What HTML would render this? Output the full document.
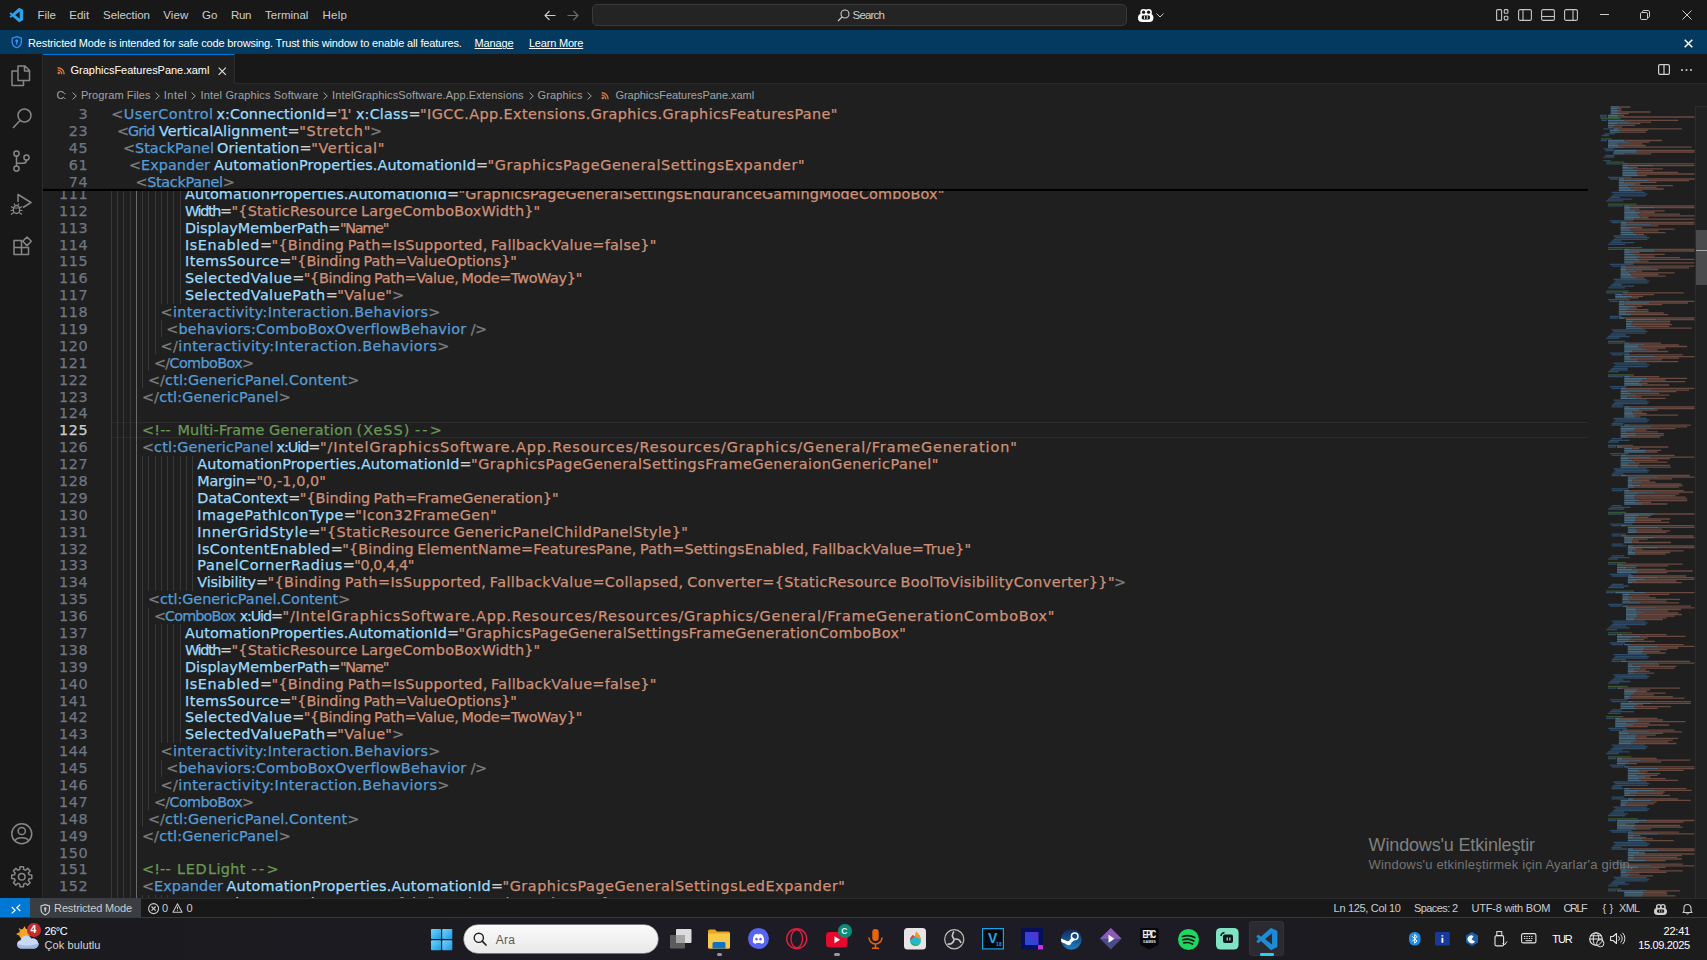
<!DOCTYPE html>
<html lang="en">
<head>
<meta charset="utf-8">
<title>GraphicsFeaturesPane.xaml - Visual Studio Code</title>
<style>
*{box-sizing:border-box;margin:0;padding:0}
html,body{width:1707px;height:960px;overflow:hidden;background:#181818;font-family:"Liberation Sans",sans-serif;color:#ccc}
#root{position:relative;width:1707px;height:960px;overflow:hidden}
.abs{position:absolute}
svg{display:block;position:absolute;overflow:visible}
/* title bar */
#title{left:0;top:0;width:1707px;height:30px;background:#181818}
#title .m{position:absolute;top:8px;font-size:11.5px;line-height:14px;color:#ccc;white-space:nowrap}
#search{left:592px;top:4px;width:535px;height:22px;background:#242424;border:1px solid #3a3a3a;border-radius:5px}
/* banner */
#banner{left:0;top:30px;width:1707px;height:24px;background:#043a5f}
#banner .t{position:absolute;top:6px;font-size:11px;line-height:14px;color:#fff;white-space:nowrap}
/* activity */
#act{left:0;top:54px;width:43px;height:844px;background:#181818;border-right:1px solid #2b2b2b}
/* tabs */
#tabs{left:43px;top:54px;width:1664px;height:30px;background:#181818}
#tabline{left:192px;top:29.2px;width:1472px;height:1px;background:#2b2b2b}
#tab{left:0;top:0;width:192px;height:30px;background:#1f1f1f;border-top:1px solid #0078d4;border-right:1px solid #2b2b2b}
#bc{left:43px;top:84px;width:1664px;height:22px;background:#1f1f1f}
#bc .t{position:absolute;top:4px;font-size:11px;line-height:14px;color:#a0a0a0;white-space:nowrap}
/* editor */
#ed{left:43px;top:106px;width:1664px;height:792px;background:#1f1f1f;overflow:hidden}
#sticky{left:0;top:0;width:1545px;height:85px;background:linear-gradient(180deg,#1f1f1f 0,#1f1f1f 81.5px,#161616 83.3px,#000 83.5px,#000 84.9px,rgba(0,0,0,0) 85px);overflow:hidden}
.ln{position:absolute;left:0;width:1545px;height:16.875px;font:14.4px/16.875px "DejaVu Sans","Liberation Sans",sans-serif;white-space:pre;word-spacing:-1.3px}
.ln b{position:absolute;top:0.6px;font-weight:normal;white-space:pre}
.ln i{font-style:normal}
.ln b,.ln u{-webkit-text-stroke:.25px}
.ln u{position:absolute;left:0;top:0.6px;width:45.1px;text-align:right;text-decoration:none;color:#6e7681;letter-spacing:.55px}
.ln u.an{color:#ccc}
.ln s{position:absolute;top:0;width:1px;height:17px;background:#383838}
.ln s.ga{background:#6b6b6b}
.cur:before{content:"";box-sizing:border-box;position:absolute;left:67px;top:-.15px;width:1478px;height:16.2px;border-top:1px solid #2b2b2b;border-bottom:1px solid #2b2b2b}
.p{color:#808080}.t{color:#569cd6}.a{color:#9cdcfe}.e{color:#ccc}.s{color:#ce9178}.c{color:#6a9955}
.tx{position:absolute;white-space:pre;display:block}
/* status */
#status{left:0;top:898px;width:1707px;height:20px;background:#181818;border-top:1px solid #2b2b2b}
#status .t{position:absolute;top:4px;font-size:11px;line-height:13px;color:#ccc;white-space:nowrap}
/* taskbar */
#task{left:0;top:918px;width:1707px;height:42px;background:linear-gradient(90deg,#1b1b1e 0,#1d1b24 35%,#1d1b24 70%,#1c1c1d 85%)}
#task .t{position:absolute;font-size:11px;line-height:13px;color:#fff;white-space:nowrap}
</style>
</head>
<body>
<div id="root">

<div id="title" class="abs">
<svg style="left:8.50px;top:7.90px" width="14.80" height="14.20" viewBox="-4 0 82 87" ><path d="M74.9 9.6 56 0.5a5.7 5.7 0 0 0-6.5 1.1L13.2 34.7 4.5 28.1a3.8 3.8 0 0 0-4.9.2l-2.8 2.5a3.8 3.8 0 0 0 0 5.6L4.3 43.3l-7.5 6.9a3.8 3.8 0 0 0 0 5.6l2.8 2.5a3.8 3.8 0 0 0 4.9.2l8.7-6.6 36.3 33.1a5.7 5.7 0 0 0 6.5 1.1l18.9-9.1a5.7 5.7 0 0 0 3.2-5.2V14.8a5.7 5.7 0 0 0-3.2-5.2zM57 65.6 29.400 43.300 57 21z" fill="#2aa3ee"/></svg>
<span class="tx" style="left:37.6px;top:7.8px;font-size:11.5px;line-height:14px;color:#ccc;letter-spacing:-0.077px;">File</span>
<span class="tx" style="left:69.3px;top:7.8px;font-size:11.5px;line-height:14px;color:#ccc;letter-spacing:-0.009px;">Edit</span>
<span class="tx" style="left:103.1px;top:7.8px;font-size:11.5px;line-height:14px;color:#ccc;letter-spacing:-0.064px;">Selection</span>
<span class="tx" style="left:163.3px;top:7.8px;font-size:11.5px;line-height:14px;color:#ccc;letter-spacing:0.110px;">View</span>
<span class="tx" style="left:202.1px;top:7.8px;font-size:11.5px;line-height:14px;color:#ccc;letter-spacing:-0.044px;">Go</span>
<span class="tx" style="left:231.1px;top:7.8px;font-size:11.5px;line-height:14px;color:#ccc;letter-spacing:-0.405px;">Run</span>
<span class="tx" style="left:265.1px;top:7.8px;font-size:11.5px;line-height:14px;color:#ccc;letter-spacing:-0.024px;">Terminal</span>
<span class="tx" style="left:322.4px;top:7.8px;font-size:11.5px;line-height:14px;color:#ccc;letter-spacing:0.298px;">Help</span>
<svg style="left:544.00px;top:10.00px" width="12.00" height="11.00" viewBox="0 0 12 11" ><path d="M11.5 5.5H1M5.5 1 1 5.5 5.5 10" fill="none" stroke="#ccc" stroke-width="1.1"/></svg>
<svg style="left:567.00px;top:10.00px" width="12.00" height="11.00" viewBox="0 0 12 11" ><path d="M.5 5.5H11M6.500 1 11 5.500 6.500 10" fill="none" stroke="#6c6c6c" stroke-width="1.1"/></svg>
<div id="search" class="abs"></div>
<svg style="left:837.00px;top:9.00px" width="13.00" height="13.00" viewBox="0 0 13 13" ><circle cx="8" cy="5" r="4" fill="none" stroke="#ccc" stroke-width="1.1"/><path d="M5.200 7.800 1 12" stroke="#ccc" stroke-width="1.2" fill="none"/></svg>
<span class="tx" style="left:852.6px;top:7.8px;font-size:11.5px;line-height:14px;color:#ccc;letter-spacing:-0.828px;">Search</span>
<svg style="left:1137.70px;top:8.80px" width="15.40" height="13.00" viewBox="0 0 15.400 13" ><circle cx="5.700" cy="3.400" r="3.400" fill="#fff"/><circle cx="10.500" cy="3.400" r="3.400" fill="#fff"/><rect x="0" y="4.800" width="15.400" height="8.200" rx="4" fill="#fff"/><circle cx="5.600" cy="3.200" r="1.650" fill="#181818"/><circle cx="10.600" cy="3.200" r="1.650" fill="#181818"/><rect x="3.700" y="6.600" width="8.300" height="3.800" rx="1.300" fill="#181818"/><path d="M6.500 7V10M9.300 7V10" stroke="#fff" stroke-width=".8"/></svg>
<svg style="left:1156.00px;top:12.50px" width="8.00" height="5.00" viewBox="0 0 8 5" ><path d="M.5.500 4 4 7.500.500" fill="none" stroke="#ccc" stroke-width="1"/></svg>
<svg style="left:1495.60px;top:8.90px" width="13.00" height="12.00" viewBox="0 0 13 12" ><rect x=".6" y=".6" width="5" height="10.800" rx="1" fill="none" stroke="#c5c5c5" stroke-width="1.1"/><rect x="8.300" y=".6" width="3.600" height="3.600" rx=".8" fill="none" stroke="#c5c5c5" stroke-width="1.1"/><rect x="8.300" y="7.300" width="3.600" height="3.600" rx=".8" fill="none" stroke="#c5c5c5" stroke-width="1.1"/></svg>
<svg style="left:1517.60px;top:8.90px" width="14.00" height="12.00" viewBox="0 0 14 12" ><rect x=".6" y=".6" width="12.800" height="10.800" rx="1.500" fill="none" stroke="#c5c5c5" stroke-width="1.1"/><path d="M5 .6V11.400" stroke="#c5c5c5" stroke-width="1.1"/></svg>
<svg style="left:1541.00px;top:8.90px" width="14.00" height="12.00" viewBox="0 0 14 12" ><rect x=".6" y=".6" width="12.800" height="10.800" rx="1.500" fill="none" stroke="#c5c5c5" stroke-width="1.1"/><path d="M.6 7.500H13.400" stroke="#c5c5c5" stroke-width="1.1"/></svg>
<svg style="left:1564.30px;top:8.90px" width="14.00" height="12.00" viewBox="0 0 14 12" ><rect x=".6" y=".6" width="12.800" height="10.800" rx="1.500" fill="none" stroke="#c5c5c5" stroke-width="1.1"/><path d="M9 .6V11.400" stroke="#c5c5c5" stroke-width="1.1"/></svg>
<svg style="left:1600.00px;top:14.00px" width="9.00" height="1.00" viewBox="0 0 9 1" ><path d="M0 .5H9" stroke="#ccc" stroke-width="1"/></svg>
<svg style="left:1640.40px;top:10.20px" width="10.00" height="10.00" viewBox="0 0 10 10" ><rect x=".5" y="2.500" width="7" height="7" rx="1.200" fill="none" stroke="#ccc" stroke-width="1"/><path d="M2.500 2.500V1.800Q2.500.500 3.800.500H8.200Q9.500.500 9.500 1.800V6.200Q9.500 7.500 8.200 7.500H7.500" fill="none" stroke="#ccc" stroke-width="1"/></svg>
<svg style="left:1681.50px;top:10.20px" width="10.00" height="10.00" viewBox="0 0 10 10" ><path d="M.5.500 9.500 9.500M9.500.500.500 9.500" stroke="#ccc" stroke-width="1"/></svg>
</div>

<div id="banner" class="abs">
<svg style="left:10.60px;top:6.20px" width="11.50" height="12.40" viewBox="0 0 11 13" ><path d="M5.500.700 10.300 2.300V6.300C10.300 9.300 8.300 11.300 5.500 12.300 2.700 11.300.700 9.300.700 6.300V2.300Z" fill="none" stroke="#3794ff" stroke-width="1.300"/><circle cx="5.500" cy="5.300" r="1.500" fill="#3794ff"/><path d="M5.500 6V9" stroke="#3794ff" stroke-width="1.300"/></svg>
<span class="tx" style="left:28.1px;top:7.1px;font-size:11px;line-height:13px;color:#fff;letter-spacing:-0.163px;">Restricted Mode is intended for safe code browsing. Trust this window to enable all features.</span>
<span class="tx" style="left:474.6px;top:7.1px;font-size:11px;line-height:13px;color:#fff;letter-spacing:-0.143px;text-decoration:underline">Manage</span>
<span class="tx" style="left:528.9px;top:7.1px;font-size:11px;line-height:13px;color:#fff;letter-spacing:-0.191px;text-decoration:underline">Learn More</span>
<svg style="left:1684.00px;top:8.70px" width="9.00" height="9.00" viewBox="0 0 9 9" ><path d="M.7.700 8.300 8.300M8.300.700.700 8.300" stroke="#fff" stroke-width="1.500"/></svg>
</div>

<div id="act" class="abs">
<svg style="left:11.25px;top:11.00px" width="19.50" height="21.50" viewBox="0 0 19.500 21.500" ><path d="M7 1H14L18.500 5.500V15.500H7Z M13.500 1V6H18.500" fill="none" stroke="#868686" stroke-width="1.500" stroke-linejoin="round"/><path d="M7 6H1V20.500H12.500V15.500" fill="none" stroke="#868686" stroke-width="1.500" stroke-linejoin="round"/></svg>
<svg style="left:12.00px;top:54.00px" width="20.00" height="21.00" viewBox="0 0 20 21" ><circle cx="12.500" cy="7.500" r="6.500" fill="none" stroke="#868686" stroke-width="1.500"/><path d="M8 12.500 1 20" stroke="#868686" stroke-width="1.600"/></svg>
<svg style="left:13.00px;top:96.00px" width="17.00" height="22.00" viewBox="0 0 17 22" ><circle cx="3.500" cy="3.500" r="2.600" fill="none" stroke="#868686" stroke-width="1.500"/><circle cx="3.500" cy="18.500" r="2.600" fill="none" stroke="#868686" stroke-width="1.500"/><circle cx="13.500" cy="7.500" r="2.600" fill="none" stroke="#868686" stroke-width="1.500"/><path d="M3.500 6V16M13.500 10V10.300Q13.500 13.200 10.500 13.200H3.500" fill="none" stroke="#868686" stroke-width="1.500"/></svg>
<svg style="left:10.00px;top:139.00px" width="22.50" height="22.00" viewBox="0 0 22.500 22" ><path d="M8 9V1.500L21 9.500 13 14.500" fill="none" stroke="#868686" stroke-width="1.500" stroke-linejoin="round"/><ellipse cx="6.500" cy="16.500" rx="3.200" ry="4" fill="none" stroke="#868686" stroke-width="1.400"/><path d="M3.500 15H9.500M1 13.500 3.500 15M12 13.500 9.500 15M.5 17.500H3.300M9.700 17.500H12.500M1 21.500 3.800 19.500M12 21.500 9.200 19.500M5 12 4 10.500M8 12 9 10.500" fill="none" stroke="#868686" stroke-width="1.200"/></svg>
<svg style="left:12.50px;top:182.25px" width="19.00" height="19.50" viewBox="0 0 19 19.500" ><path d="M1 4.500H8.500V18.500H1ZM1 11.500H15.500V18.500H8.500M8.500 11.500H15.500" fill="none" stroke="#868686" stroke-width="1.500" stroke-linejoin="round"/><path d="M14 1 18.300 5.300 14 9.600 9.700 5.300Z" fill="none" stroke="#868686" stroke-width="1.500" stroke-linejoin="round"/></svg>
<svg style="left:10.50px;top:769.00px" width="21.50" height="21.50" viewBox="0 0 21.500 21.500" ><circle cx="10.750" cy="10.750" r="10" fill="none" stroke="#868686" stroke-width="1.500"/><circle cx="10.750" cy="8" r="3.600" fill="none" stroke="#868686" stroke-width="1.500"/><path d="M4 18C5 13.500 16.500 13.500 17.500 18" fill="none" stroke="#868686" stroke-width="1.500"/></svg>
<svg style="left:10.50px;top:811.50px" width="21.50" height="21.50" viewBox="0 0 21.500 21.500" ><path d="M20.80 9.00L20.80 12.50L18.11 12.64L17.29 14.62L19.10 16.62L16.62 19.10L14.62 17.29L12.64 18.11L12.50 20.80L9.00 20.80L8.86 18.11L6.88 17.29L4.88 19.10L2.40 16.62L4.21 14.62L3.39 12.64L0.70 12.50L0.70 9.00L3.39 8.86L4.21 6.88L2.40 4.88L4.88 2.40L6.88 4.21L8.86 3.39L9.00 0.70L12.50 0.70L12.64 3.39L14.62 4.21L16.62 2.40L19.10 4.88L17.29 6.88L18.11 8.86Z" fill="none" stroke="#868686" stroke-width="1.500" stroke-linejoin="round"/><circle cx="10.750" cy="10.750" r="3.300" fill="none" stroke="#868686" stroke-width="1.500"/></svg>
</div>

<div id="tabs" class="abs">
<div id="tab" class="abs">
<svg style="left:13.50px;top:11.80px" width="8.00" height="7.60" viewBox="0 0 9 9" ><circle cx="1.800" cy="7.200" r="1.500" fill="#d9763a"/><path d="M.5 3.700A4.800 4.800 0 0 1 5.300 8.500M.5.800A7.700 7.700 0 0 1 8.200 8.500" fill="none" stroke="#d9763a" stroke-width="1.700"/></svg>
<span class="tx" style="left:27.6px;top:8.7px;font-size:11px;line-height:13px;color:#fff;letter-spacing:-0.025px;">GraphicsFeaturesPane.xaml</span>
<svg style="left:174.50px;top:11.50px" width="8.50" height="8.50" viewBox="0 0 9 9" ><path d="M.7.700 8.300 8.300M8.300.700.700 8.300" stroke="#e0e0e0" stroke-width="1.200"/></svg>
</div>
<div id="tabline" class="abs"></div>
<svg style="left:1614.80px;top:10.40px" width="12.00" height="11.00" viewBox="0 0 12 11" ><rect x=".6" y=".6" width="10.800" height="9.800" rx="1.300" fill="none" stroke="#d0d0d0" stroke-width="1.200"/><path d="M6 .6V10.400" stroke="#d0d0d0" stroke-width="1.200"/></svg>
<svg style="left:1638.00px;top:15.00px" width="11.00" height="2.00" viewBox="0 0 11 2" ><circle cx="1" cy="1" r="1" fill="#d0d0d0"/><circle cx="5.500" cy="1" r="1" fill="#d0d0d0"/><circle cx="10" cy="1" r="1" fill="#d0d0d0"/></svg>
</div>

<div id="bc" class="abs">
<span class="tx" style="left:13.6px;top:5.2px;font-size:11px;line-height:13px;color:#a3a3a3;letter-spacing:-1.200px;">C:</span>
<span class="tx" style="left:37.9px;top:5.2px;font-size:11px;line-height:13px;color:#a3a3a3;letter-spacing:0.090px;">Program Files</span>
<span class="tx" style="left:120.8px;top:5.2px;font-size:11px;line-height:13px;color:#a3a3a3;letter-spacing:0.501px;">Intel</span>
<span class="tx" style="left:157.6px;top:5.2px;font-size:11px;line-height:13px;color:#a3a3a3;letter-spacing:0.157px;">Intel Graphics Software</span>
<span class="tx" style="left:289.1px;top:5.2px;font-size:11px;line-height:13px;color:#a3a3a3;letter-spacing:0.109px;">IntelGraphicsSoftware.App.Extensions</span>
<span class="tx" style="left:494.6px;top:5.2px;font-size:11px;line-height:13px;color:#a3a3a3;letter-spacing:0.110px;">Graphics</span>
<span class="tx" style="left:572.4px;top:5.2px;font-size:11px;line-height:13px;color:#a3a3a3;letter-spacing:-0.025px;">GraphicsFeaturesPane.xaml</span>
<svg style="left:29.00px;top:7.50px" width="5.00" height="8.00" viewBox="0 0 5 8" ><path d="M.6.600 4.300 4 .6 7.400" fill="none" stroke="#a3a3a3" stroke-width="1"/></svg>
<svg style="left:112.00px;top:7.50px" width="5.00" height="8.00" viewBox="0 0 5 8" ><path d="M.6.600 4.300 4 .6 7.400" fill="none" stroke="#a3a3a3" stroke-width="1"/></svg>
<svg style="left:148.00px;top:7.50px" width="5.00" height="8.00" viewBox="0 0 5 8" ><path d="M.6.600 4.300 4 .6 7.400" fill="none" stroke="#a3a3a3" stroke-width="1"/></svg>
<svg style="left:280.00px;top:7.50px" width="5.00" height="8.00" viewBox="0 0 5 8" ><path d="M.6.600 4.300 4 .6 7.400" fill="none" stroke="#a3a3a3" stroke-width="1"/></svg>
<svg style="left:486.00px;top:7.50px" width="5.00" height="8.00" viewBox="0 0 5 8" ><path d="M.6.600 4.300 4 .6 7.400" fill="none" stroke="#a3a3a3" stroke-width="1"/></svg>
<svg style="left:544.00px;top:7.50px" width="5.00" height="8.00" viewBox="0 0 5 8" ><path d="M.6.600 4.300 4 .6 7.400" fill="none" stroke="#a3a3a3" stroke-width="1"/></svg>
<svg style="left:558.00px;top:7.80px" width="8.00" height="7.60" viewBox="0 0 9 9" ><circle cx="1.800" cy="7.200" r="1.500" fill="#d9763a"/><path d="M.5 3.700A4.800 4.800 0 0 1 5.300 8.500M.5.800A7.700 7.700 0 0 1 8.200 8.500" fill="none" stroke="#d9763a" stroke-width="1.700"/></svg>
</div>

<div id="ed" class="abs">
<div id="code" class="abs" style="left:0;top:0;width:1664px;height:792px">
<div class="ln" style="top:79.29px"><u>111</u><s style="left:68.00px"></s><s style="left:74.23px"></s><s style="left:80.46px"></s><s style="left:86.69px"></s><s style="left:92.92px" class="ga"></s><s style="left:99.15px"></s><s style="left:105.38px"></s><s style="left:111.61px"></s><s style="left:117.84px"></s><s style="left:124.07px"></s><s style="left:130.30px"></s><s style="left:136.53px"></s><b style="left:142.0px;letter-spacing:0.110px"><i class="a">AutomationProperties.AutomationId</i><i class="e">=</i></b><b style="left:415.5px;letter-spacing:0.151px"><i class="s">"GraphicsPageGeneralSettingsEnduranceGamingModeComboBox"</i></b></div>
<div class="ln" style="top:96.18px"><u>112</u><s style="left:68.00px"></s><s style="left:74.23px"></s><s style="left:80.46px"></s><s style="left:86.69px"></s><s style="left:92.92px" class="ga"></s><s style="left:99.15px"></s><s style="left:105.38px"></s><s style="left:111.61px"></s><s style="left:117.84px"></s><s style="left:124.07px"></s><s style="left:130.30px"></s><s style="left:136.53px"></s><b style="left:142.0px;letter-spacing:-1.375px"><i class="a">Width</i><i class="e">=</i></b><b style="left:188.5px;letter-spacing:0.191px"><i class="s">"{StaticResource LargeComboBoxWidth}"</i></b></div>
<div class="ln" style="top:113.07px"><u>113</u><s style="left:68.00px"></s><s style="left:74.23px"></s><s style="left:80.46px"></s><s style="left:86.69px"></s><s style="left:92.92px" class="ga"></s><s style="left:99.15px"></s><s style="left:105.38px"></s><s style="left:111.61px"></s><s style="left:117.84px"></s><s style="left:124.07px"></s><s style="left:130.30px"></s><s style="left:136.53px"></s><b style="left:142.0px;letter-spacing:-0.031px"><i class="a">DisplayMemberPath</i><i class="e">=</i></b><b style="left:296.9px;letter-spacing:-1.261px"><i class="s">"Name"</i></b></div>
<div class="ln" style="top:129.96px"><u>114</u><s style="left:68.00px"></s><s style="left:74.23px"></s><s style="left:80.46px"></s><s style="left:86.69px"></s><s style="left:92.92px" class="ga"></s><s style="left:99.15px"></s><s style="left:105.38px"></s><s style="left:111.61px"></s><s style="left:117.84px"></s><s style="left:124.07px"></s><s style="left:130.30px"></s><s style="left:136.53px"></s><b style="left:142.0px;letter-spacing:0.561px"><i class="a">IsEnabled</i><i class="e">=</i></b><b style="left:228.5px;letter-spacing:0.287px"><i class="s">"{Binding Path=IsSupported, FallbackValue=false}"</i></b></div>
<div class="ln" style="top:146.85px"><u>115</u><s style="left:68.00px"></s><s style="left:74.23px"></s><s style="left:80.46px"></s><s style="left:86.69px"></s><s style="left:92.92px" class="ga"></s><s style="left:99.15px"></s><s style="left:105.38px"></s><s style="left:111.61px"></s><s style="left:117.84px"></s><s style="left:124.07px"></s><s style="left:130.30px"></s><s style="left:136.53px"></s><b style="left:142.0px;letter-spacing:0.414px"><i class="a">ItemsSource</i><i class="e">=</i></b><b style="left:247.8px;letter-spacing:-0.065px"><i class="s">"{Binding Path=ValueOptions}"</i></b></div>
<div class="ln" style="top:163.74px"><u>116</u><s style="left:68.00px"></s><s style="left:74.23px"></s><s style="left:80.46px"></s><s style="left:86.69px"></s><s style="left:92.92px" class="ga"></s><s style="left:99.15px"></s><s style="left:105.38px"></s><s style="left:111.61px"></s><s style="left:117.84px"></s><s style="left:124.07px"></s><s style="left:130.30px"></s><s style="left:136.53px"></s><b style="left:142.0px;letter-spacing:0.410px"><i class="a">SelectedValue</i><i class="e">=</i></b><b style="left:260.8px;letter-spacing:-0.313px"><i class="s">"{Binding Path=Value, Mode=TwoWay}"</i></b></div>
<div class="ln" style="top:180.63px"><u>117</u><s style="left:68.00px"></s><s style="left:74.23px"></s><s style="left:80.46px"></s><s style="left:86.69px"></s><s style="left:92.92px" class="ga"></s><s style="left:99.15px"></s><s style="left:105.38px"></s><s style="left:111.61px"></s><s style="left:117.84px"></s><s style="left:124.07px"></s><s style="left:130.30px"></s><s style="left:136.53px"></s><b style="left:142.0px;letter-spacing:0.419px"><i class="a">SelectedValuePath</i><i class="e">=</i></b><b style="left:294.2px;letter-spacing:0.339px"><i class="s">"Value"</i></b><b style="left:349.0px;letter-spacing:0.000px"><i class="p">&gt;</i></b></div>
<div class="ln" style="top:197.52px"><u>118</u><s style="left:68.00px"></s><s style="left:74.23px"></s><s style="left:80.46px"></s><s style="left:86.69px"></s><s style="left:92.92px" class="ga"></s><s style="left:99.15px"></s><s style="left:105.38px"></s><s style="left:111.61px"></s><b style="left:117.6px;letter-spacing:0.313px"><i class="p">&lt;</i><i class="t">interactivity:Interaction.Behaviors</i><i class="p">&gt;</i></b></div>
<div class="ln" style="top:214.41px"><u>119</u><s style="left:68.00px"></s><s style="left:74.23px"></s><s style="left:80.46px"></s><s style="left:86.69px"></s><s style="left:92.92px" class="ga"></s><s style="left:99.15px"></s><s style="left:105.38px"></s><s style="left:111.61px"></s><s style="left:117.84px"></s><b style="left:123.3px;letter-spacing:0.192px"><i class="p">&lt;</i><i class="t">behaviors:ComboBoxOverflowBehavior</i></b><b style="left:427.8px;letter-spacing:-0.606px"><i class="p">/&gt;</i></b></div>
<div class="ln" style="top:231.30px"><u>120</u><s style="left:68.00px"></s><s style="left:74.23px"></s><s style="left:80.46px"></s><s style="left:86.69px"></s><s style="left:92.92px" class="ga"></s><s style="left:99.15px"></s><s style="left:105.38px"></s><s style="left:111.61px"></s><b style="left:117.6px;letter-spacing:0.416px"><i class="p">&lt;/</i><i class="t">interactivity:Interaction.Behaviors</i><i class="p">&gt;</i></b></div>
<div class="ln" style="top:248.19px"><u>121</u><s style="left:68.00px"></s><s style="left:74.23px"></s><s style="left:80.46px"></s><s style="left:86.69px"></s><s style="left:92.92px" class="ga"></s><s style="left:99.15px"></s><s style="left:105.38px"></s><b style="left:110.9px;letter-spacing:-0.633px"><i class="p">&lt;/</i><i class="t">ComboBox</i><i class="p">&gt;</i></b></div>
<div class="ln" style="top:265.08px"><u>122</u><s style="left:68.00px"></s><s style="left:74.23px"></s><s style="left:80.46px"></s><s style="left:86.69px"></s><s style="left:92.92px" class="ga"></s><s style="left:99.15px"></s><b style="left:104.9px;letter-spacing:0.138px"><i class="p">&lt;/</i><i class="t">ctl:GenericPanel.Content</i><i class="p">&gt;</i></b></div>
<div class="ln" style="top:281.97px"><u>123</u><s style="left:68.00px"></s><s style="left:74.23px"></s><s style="left:80.46px"></s><s style="left:86.69px"></s><s style="left:92.92px" class="ga"></s><b style="left:98.9px;letter-spacing:0.161px"><i class="p">&lt;/</i><i class="t">ctl:GenericPanel</i><i class="p">&gt;</i></b></div>
<div class="ln" style="top:298.86px"><u>124</u><s style="left:68.00px"></s><s style="left:74.23px"></s><s style="left:80.46px"></s><s style="left:86.69px"></s><s style="left:92.92px" class="ga"></s></div>
<div class="ln cur" style="top:315.75px"><u class="an">125</u><s style="left:68.00px"></s><s style="left:74.23px"></s><s style="left:80.46px"></s><s style="left:86.69px"></s><s style="left:92.92px" class="ga"></s><b style="left:98.9px;letter-spacing:0.227px"><i class="c">&lt;!--</i></b><b style="left:134.5px;letter-spacing:0.168px"><i class="c">Multi-Frame</i></b><b style="left:225.9px;letter-spacing:0.369px"><i class="c">Generation</i></b><b style="left:313.5px;letter-spacing:1.044px"><i class="c">(XeSS)</i></b><b style="left:372.0px;letter-spacing:2.123px"><i class="c">--&gt;</i></b></div>
<div class="ln" style="top:332.64px"><u>126</u><s style="left:68.00px"></s><s style="left:74.23px"></s><s style="left:80.46px"></s><s style="left:86.69px"></s><s style="left:92.92px" class="ga"></s><b style="left:98.9px;letter-spacing:0.157px"><i class="p">&lt;</i><i class="t">ctl:GenericPanel</i></b><b style="left:233.5px;letter-spacing:-1.039px"><i class="a">x:Uid</i><i class="e">=</i></b><b style="left:276.9px;letter-spacing:0.887px"><i class="s">"/IntelGraphicsSoftware.App.Resources/Resources/Graphics/General/FrameGeneration"</i></b></div>
<div class="ln" style="top:349.53px"><u>127</u><s style="left:68.00px"></s><s style="left:74.23px"></s><s style="left:80.46px"></s><s style="left:86.69px"></s><s style="left:92.92px" class="ga"></s><s style="left:99.15px"></s><s style="left:105.38px"></s><s style="left:111.61px"></s><s style="left:117.84px"></s><s style="left:124.07px"></s><s style="left:130.30px"></s><s style="left:136.53px"></s><s style="left:142.76px"></s><s style="left:148.99px"></s><b style="left:154.3px;letter-spacing:0.119px"><i class="a">AutomationProperties.AutomationId</i><i class="e">=</i></b><b style="left:428.1px;letter-spacing:0.477px"><i class="s">"GraphicsPageGeneralSettingsFrameGeneraionGenericPanel"</i></b></div>
<div class="ln" style="top:366.42px"><u>128</u><s style="left:68.00px"></s><s style="left:74.23px"></s><s style="left:80.46px"></s><s style="left:86.69px"></s><s style="left:92.92px" class="ga"></s><s style="left:99.15px"></s><s style="left:105.38px"></s><s style="left:111.61px"></s><s style="left:117.84px"></s><s style="left:124.07px"></s><s style="left:130.30px"></s><s style="left:136.53px"></s><s style="left:142.76px"></s><s style="left:148.99px"></s><b style="left:154.3px;letter-spacing:-0.270px"><i class="a">Margin</i><i class="e">=</i></b><b style="left:213.4px;letter-spacing:0.080px"><i class="s">"0,-1,0,0"</i></b></div>
<div class="ln" style="top:383.31px"><u>129</u><s style="left:68.00px"></s><s style="left:74.23px"></s><s style="left:80.46px"></s><s style="left:86.69px"></s><s style="left:92.92px" class="ga"></s><s style="left:99.15px"></s><s style="left:105.38px"></s><s style="left:111.61px"></s><s style="left:117.84px"></s><s style="left:124.07px"></s><s style="left:130.30px"></s><s style="left:136.53px"></s><s style="left:142.76px"></s><s style="left:148.99px"></s><b style="left:154.3px;letter-spacing:0.018px"><i class="a">DataContext</i><i class="e">=</i></b><b style="left:256.8px;letter-spacing:0.026px"><i class="s">"{Binding Path=FrameGeneration}"</i></b></div>
<div class="ln" style="top:400.20px"><u>130</u><s style="left:68.00px"></s><s style="left:74.23px"></s><s style="left:80.46px"></s><s style="left:86.69px"></s><s style="left:92.92px" class="ga"></s><s style="left:99.15px"></s><s style="left:105.38px"></s><s style="left:111.61px"></s><s style="left:117.84px"></s><s style="left:124.07px"></s><s style="left:130.30px"></s><s style="left:136.53px"></s><s style="left:142.76px"></s><s style="left:148.99px"></s><b style="left:154.3px;letter-spacing:0.390px"><i class="a">ImagePathIconType</i><i class="e">=</i></b><b style="left:312.3px;letter-spacing:0.374px"><i class="s">"Icon32FrameGen"</i></b></div>
<div class="ln" style="top:417.09px"><u>131</u><s style="left:68.00px"></s><s style="left:74.23px"></s><s style="left:80.46px"></s><s style="left:86.69px"></s><s style="left:92.92px" class="ga"></s><s style="left:99.15px"></s><s style="left:105.38px"></s><s style="left:111.61px"></s><s style="left:117.84px"></s><s style="left:124.07px"></s><s style="left:130.30px"></s><s style="left:136.53px"></s><s style="left:142.76px"></s><s style="left:148.99px"></s><b style="left:154.3px;letter-spacing:0.531px"><i class="a">InnerGridStyle</i><i class="e">=</i></b><b style="left:276.9px;letter-spacing:0.447px"><i class="s">"{StaticResource GenericPanelChildPanelStyle}"</i></b></div>
<div class="ln" style="top:433.98px"><u>132</u><s style="left:68.00px"></s><s style="left:74.23px"></s><s style="left:80.46px"></s><s style="left:86.69px"></s><s style="left:92.92px" class="ga"></s><s style="left:99.15px"></s><s style="left:105.38px"></s><s style="left:111.61px"></s><s style="left:117.84px"></s><s style="left:124.07px"></s><s style="left:130.30px"></s><s style="left:136.53px"></s><s style="left:142.76px"></s><s style="left:148.99px"></s><b style="left:154.3px;letter-spacing:0.388px"><i class="a">IsContentEnabled</i><i class="e">=</i></b><b style="left:299.2px;letter-spacing:0.158px"><i class="s">"{Binding ElementName=FeaturesPane, Path=SettingsEnabled, FallbackValue=True}"</i></b></div>
<div class="ln" style="top:450.87px"><u>133</u><s style="left:68.00px"></s><s style="left:74.23px"></s><s style="left:80.46px"></s><s style="left:86.69px"></s><s style="left:92.92px" class="ga"></s><s style="left:99.15px"></s><s style="left:105.38px"></s><s style="left:111.61px"></s><s style="left:117.84px"></s><s style="left:124.07px"></s><s style="left:130.30px"></s><s style="left:136.53px"></s><s style="left:142.76px"></s><s style="left:148.99px"></s><b style="left:154.3px;letter-spacing:0.585px"><i class="a">PanelCornerRadius</i><i class="e">=</i></b><b style="left:311.3px;letter-spacing:-0.437px"><i class="s">"0,0,4,4"</i></b></div>
<div class="ln" style="top:467.76px"><u>134</u><s style="left:68.00px"></s><s style="left:74.23px"></s><s style="left:80.46px"></s><s style="left:86.69px"></s><s style="left:92.92px" class="ga"></s><s style="left:99.15px"></s><s style="left:105.38px"></s><s style="left:111.61px"></s><s style="left:117.84px"></s><s style="left:124.07px"></s><s style="left:130.30px"></s><s style="left:136.53px"></s><s style="left:142.76px"></s><s style="left:148.99px"></s><b style="left:154.3px;letter-spacing:-0.168px"><i class="a">Visibility</i><i class="e">=</i></b><b style="left:224.5px;letter-spacing:0.386px"><i class="s">"{Binding Path=IsSupported, FallbackValue=Collapsed, Converter={StaticResource BoolToVisibilityConverter}}"</i></b><b style="left:1071.0px;letter-spacing:0.000px"><i class="p">&gt;</i></b></div>
<div class="ln" style="top:484.65px"><u>135</u><s style="left:68.00px"></s><s style="left:74.23px"></s><s style="left:80.46px"></s><s style="left:86.69px"></s><s style="left:92.92px" class="ga"></s><s style="left:99.15px"></s><b style="left:104.9px;letter-spacing:-0.026px"><i class="p">&lt;</i><i class="t">ctl:GenericPanel.Content</i><i class="p">&gt;</i></b></div>
<div class="ln" style="top:501.54px"><u>136</u><s style="left:68.00px"></s><s style="left:74.23px"></s><s style="left:80.46px"></s><s style="left:86.69px"></s><s style="left:92.92px" class="ga"></s><s style="left:99.15px"></s><s style="left:105.38px"></s><b style="left:110.9px;letter-spacing:-0.891px"><i class="p">&lt;</i><i class="t">ComboBox</i></b><b style="left:196.7px;letter-spacing:-1.159px"><i class="a">x:Uid</i><i class="e">=</i></b><b style="left:239.5px;letter-spacing:0.778px"><i class="s">"/IntelGraphicsSoftware.App.Resources/Resources/Graphics/General/FrameGenerationComboBox"</i></b></div>
<div class="ln" style="top:518.43px"><u>137</u><s style="left:68.00px"></s><s style="left:74.23px"></s><s style="left:80.46px"></s><s style="left:86.69px"></s><s style="left:92.92px" class="ga"></s><s style="left:99.15px"></s><s style="left:105.38px"></s><s style="left:111.61px"></s><s style="left:117.84px"></s><s style="left:124.07px"></s><s style="left:130.30px"></s><s style="left:136.53px"></s><b style="left:142.0px;letter-spacing:0.110px"><i class="a">AutomationProperties.AutomationId</i><i class="e">=</i></b><b style="left:415.5px;letter-spacing:0.340px"><i class="s">"GraphicsPageGeneralSettingsFrameGenerationComboBox"</i></b></div>
<div class="ln" style="top:535.32px"><u>138</u><s style="left:68.00px"></s><s style="left:74.23px"></s><s style="left:80.46px"></s><s style="left:86.69px"></s><s style="left:92.92px" class="ga"></s><s style="left:99.15px"></s><s style="left:105.38px"></s><s style="left:111.61px"></s><s style="left:117.84px"></s><s style="left:124.07px"></s><s style="left:130.30px"></s><s style="left:136.53px"></s><b style="left:142.0px;letter-spacing:-1.375px"><i class="a">Width</i><i class="e">=</i></b><b style="left:188.5px;letter-spacing:0.191px"><i class="s">"{StaticResource LargeComboBoxWidth}"</i></b></div>
<div class="ln" style="top:552.21px"><u>139</u><s style="left:68.00px"></s><s style="left:74.23px"></s><s style="left:80.46px"></s><s style="left:86.69px"></s><s style="left:92.92px" class="ga"></s><s style="left:99.15px"></s><s style="left:105.38px"></s><s style="left:111.61px"></s><s style="left:117.84px"></s><s style="left:124.07px"></s><s style="left:130.30px"></s><s style="left:136.53px"></s><b style="left:142.0px;letter-spacing:-0.031px"><i class="a">DisplayMemberPath</i><i class="e">=</i></b><b style="left:296.9px;letter-spacing:-1.261px"><i class="s">"Name"</i></b></div>
<div class="ln" style="top:569.10px"><u>140</u><s style="left:68.00px"></s><s style="left:74.23px"></s><s style="left:80.46px"></s><s style="left:86.69px"></s><s style="left:92.92px" class="ga"></s><s style="left:99.15px"></s><s style="left:105.38px"></s><s style="left:111.61px"></s><s style="left:117.84px"></s><s style="left:124.07px"></s><s style="left:130.30px"></s><s style="left:136.53px"></s><b style="left:142.0px;letter-spacing:0.561px"><i class="a">IsEnabled</i><i class="e">=</i></b><b style="left:228.5px;letter-spacing:0.287px"><i class="s">"{Binding Path=IsSupported, FallbackValue=false}"</i></b></div>
<div class="ln" style="top:585.99px"><u>141</u><s style="left:68.00px"></s><s style="left:74.23px"></s><s style="left:80.46px"></s><s style="left:86.69px"></s><s style="left:92.92px" class="ga"></s><s style="left:99.15px"></s><s style="left:105.38px"></s><s style="left:111.61px"></s><s style="left:117.84px"></s><s style="left:124.07px"></s><s style="left:130.30px"></s><s style="left:136.53px"></s><b style="left:142.0px;letter-spacing:0.414px"><i class="a">ItemsSource</i><i class="e">=</i></b><b style="left:247.8px;letter-spacing:-0.065px"><i class="s">"{Binding Path=ValueOptions}"</i></b></div>
<div class="ln" style="top:602.88px"><u>142</u><s style="left:68.00px"></s><s style="left:74.23px"></s><s style="left:80.46px"></s><s style="left:86.69px"></s><s style="left:92.92px" class="ga"></s><s style="left:99.15px"></s><s style="left:105.38px"></s><s style="left:111.61px"></s><s style="left:117.84px"></s><s style="left:124.07px"></s><s style="left:130.30px"></s><s style="left:136.53px"></s><b style="left:142.0px;letter-spacing:0.410px"><i class="a">SelectedValue</i><i class="e">=</i></b><b style="left:260.8px;letter-spacing:-0.313px"><i class="s">"{Binding Path=Value, Mode=TwoWay}"</i></b></div>
<div class="ln" style="top:619.77px"><u>143</u><s style="left:68.00px"></s><s style="left:74.23px"></s><s style="left:80.46px"></s><s style="left:86.69px"></s><s style="left:92.92px" class="ga"></s><s style="left:99.15px"></s><s style="left:105.38px"></s><s style="left:111.61px"></s><s style="left:117.84px"></s><s style="left:124.07px"></s><s style="left:130.30px"></s><s style="left:136.53px"></s><b style="left:142.0px;letter-spacing:0.419px"><i class="a">SelectedValuePath</i><i class="e">=</i></b><b style="left:294.2px;letter-spacing:0.339px"><i class="s">"Value"</i></b><b style="left:349.0px;letter-spacing:0.000px"><i class="p">&gt;</i></b></div>
<div class="ln" style="top:636.66px"><u>144</u><s style="left:68.00px"></s><s style="left:74.23px"></s><s style="left:80.46px"></s><s style="left:86.69px"></s><s style="left:92.92px" class="ga"></s><s style="left:99.15px"></s><s style="left:105.38px"></s><s style="left:111.61px"></s><b style="left:117.6px;letter-spacing:0.313px"><i class="p">&lt;</i><i class="t">interactivity:Interaction.Behaviors</i><i class="p">&gt;</i></b></div>
<div class="ln" style="top:653.55px"><u>145</u><s style="left:68.00px"></s><s style="left:74.23px"></s><s style="left:80.46px"></s><s style="left:86.69px"></s><s style="left:92.92px" class="ga"></s><s style="left:99.15px"></s><s style="left:105.38px"></s><s style="left:111.61px"></s><s style="left:117.84px"></s><b style="left:123.3px;letter-spacing:0.192px"><i class="p">&lt;</i><i class="t">behaviors:ComboBoxOverflowBehavior</i></b><b style="left:427.8px;letter-spacing:-0.606px"><i class="p">/&gt;</i></b></div>
<div class="ln" style="top:670.44px"><u>146</u><s style="left:68.00px"></s><s style="left:74.23px"></s><s style="left:80.46px"></s><s style="left:86.69px"></s><s style="left:92.92px" class="ga"></s><s style="left:99.15px"></s><s style="left:105.38px"></s><s style="left:111.61px"></s><b style="left:117.6px;letter-spacing:0.416px"><i class="p">&lt;/</i><i class="t">interactivity:Interaction.Behaviors</i><i class="p">&gt;</i></b></div>
<div class="ln" style="top:687.33px"><u>147</u><s style="left:68.00px"></s><s style="left:74.23px"></s><s style="left:80.46px"></s><s style="left:86.69px"></s><s style="left:92.92px" class="ga"></s><s style="left:99.15px"></s><s style="left:105.38px"></s><b style="left:110.9px;letter-spacing:-0.633px"><i class="p">&lt;/</i><i class="t">ComboBox</i><i class="p">&gt;</i></b></div>
<div class="ln" style="top:704.22px"><u>148</u><s style="left:68.00px"></s><s style="left:74.23px"></s><s style="left:80.46px"></s><s style="left:86.69px"></s><s style="left:92.92px" class="ga"></s><s style="left:99.15px"></s><b style="left:104.9px;letter-spacing:0.138px"><i class="p">&lt;/</i><i class="t">ctl:GenericPanel.Content</i><i class="p">&gt;</i></b></div>
<div class="ln" style="top:721.11px"><u>149</u><s style="left:68.00px"></s><s style="left:74.23px"></s><s style="left:80.46px"></s><s style="left:86.69px"></s><s style="left:92.92px" class="ga"></s><b style="left:98.9px;letter-spacing:0.161px"><i class="p">&lt;/</i><i class="t">ctl:GenericPanel</i><i class="p">&gt;</i></b></div>
<div class="ln" style="top:738.00px"><u>150</u><s style="left:68.00px"></s><s style="left:74.23px"></s><s style="left:80.46px"></s><s style="left:86.69px"></s><s style="left:92.92px" class="ga"></s></div>
<div class="ln" style="top:754.89px"><u>151</u><s style="left:68.00px"></s><s style="left:74.23px"></s><s style="left:80.46px"></s><s style="left:86.69px"></s><s style="left:92.92px" class="ga"></s><b style="left:98.9px;letter-spacing:0.194px"><i class="c">&lt;!--</i></b><b style="left:134.0px;letter-spacing:0.648px"><i class="c">LED</i></b><b style="left:165.0px;letter-spacing:0.395px"><i class="c">Light</i></b><b style="left:208.5px;letter-spacing:2.273px"><i class="c">--&gt;</i></b></div>
<div class="ln" style="top:771.78px"><u>152</u><s style="left:68.00px"></s><s style="left:74.23px"></s><s style="left:80.46px"></s><s style="left:86.69px"></s><s style="left:92.92px" class="ga"></s><b style="left:98.9px;letter-spacing:0.055px"><i class="p">&lt;</i><i class="t">Expander</i></b><b style="left:183.4px;letter-spacing:0.189px"><i class="a">AutomationProperties.AutomationId</i><i class="e">=</i></b><b style="left:459.5px;letter-spacing:0.533px"><i class="s">"GraphicsPageGeneralSettingsLedExpander"</i></b></div>
<div class="ln" style="top:788.67px"><u>153</u><s style="left:68.00px"></s><s style="left:74.23px"></s><s style="left:80.46px"></s><s style="left:86.69px"></s><s style="left:92.92px" class="ga"></s><s style="left:99.15px"></s><s style="left:105.38px"></s><s style="left:111.61px"></s><s style="left:117.84px"></s><s style="left:124.07px"></s><b style="left:129.5px;letter-spacing:0.114px"><i class="a">AutomationProperties.Name</i><i class="e">=</i></b><b style="left:347.5px;letter-spacing:-1.409px"><i class="s">"{Binding Path=LedExpanderName}"</i></b></div>
</div>
<div id="sticky" class="abs">
<div class="ln" style="top:-0.90px"><u>3</u><b style="left:68.2px;letter-spacing:0.446px"><i class="p">&lt;</i><i class="t">UserControl</i></b><b style="left:173.4px;letter-spacing:0.062px"><i class="a">x:ConnectionId</i><i class="e">=</i></b><b style="left:294.2px;letter-spacing:-1.389px"><i class="s">'1'</i></b><b style="left:312.9px;letter-spacing:0.186px"><i class="a">x:Class</i><i class="e">=</i></b><b style="left:377.0px;letter-spacing:0.408px"><i class="s">"IGCC.App.Extensions.Graphics.GraphicsFeaturesPane"</i></b></div>
<div class="ln" style="top:16.10px"><u>23</u><b style="left:73.9px;letter-spacing:-0.916px"><i class="p">&lt;</i><i class="t">Grid</i></b><b style="left:115.9px;letter-spacing:0.056px"><i class="a">VerticalAlignment</i><i class="e">=</i></b><b style="left:256.2px;letter-spacing:0.743px"><i class="s">"Stretch"</i></b><b style="left:327.0px;letter-spacing:0.000px"><i class="p">&gt;</i></b></div>
<div class="ln" style="top:33.10px"><u>45</u><b style="left:79.9px;letter-spacing:0.037px"><i class="p">&lt;</i><i class="t">StackPanel</i></b><b style="left:174.0px;letter-spacing:0.108px"><i class="a">Orientation</i><i class="e">=</i></b><b style="left:268.2px;letter-spacing:0.666px"><i class="s">"Vertical"</i></b></div>
<div class="ln" style="top:50.10px"><u>61</u><b style="left:85.9px;letter-spacing:0.055px"><i class="p">&lt;</i><i class="t">Expander</i></b><b style="left:171.0px;letter-spacing:0.110px"><i class="a">AutomationProperties.AutomationId</i><i class="e">=</i></b><b style="left:444.5px;letter-spacing:0.590px"><i class="s">"GraphicsPageGeneralSettingsExpander"</i></b></div>
<div class="ln" style="top:67.10px"><u>74</u><b style="left:92.5px;letter-spacing:-0.326px"><i class="p">&lt;</i><i class="t">StackPanel</i><i class="p">&gt;</i></b></div>
</div>
<svg style="left:0;top:0" width="1664" height="792" viewBox="0 0 1664 792" fill="none" stroke-width="1.3" opacity=".8"><path stroke="#315579" d="M1556.9 9.4h7.2M1556.9 11.0h7.2M1558.7 14.4h5.4M1560.5 22.8h9.0M1561.4 27.8h10.8M1558.7 29.5h7.2M1557.8 34.5h6.3M1560.5 42.9h10.8M1562.3 44.5h8.1M1562.3 49.5h9.0M1560.5 51.2h10.8M1560.5 54.6h7.2M1563.2 57.9h15.3M1565.0 71.3h23.4M1566.8 73.0h8.1M1568.6 86.4h33.3M1570.4 88.1h34.2M1568.6 89.8h34.2M1566.8 91.4h9.9M1565.0 93.1h24.3M1563.2 94.8h17.1M1565.0 99.8h15.3M1566.8 114.9h23.4M1568.6 116.5h8.1M1570.4 130.0h33.3M1572.2 131.6h34.2M1570.4 133.3h34.2M1568.6 135.0h9.9M1566.8 136.7h24.3M1565.0 138.3h17.1M1565.0 143.4h15.3M1566.8 158.4h23.4M1568.6 160.1h8.1M1570.4 173.5h33.3M1572.2 175.2h34.2M1570.4 176.9h34.2M1568.6 178.5h9.9M1566.8 180.2h24.3M1565.0 181.9h17.1M1563.2 186.9h15.3M1565.0 193.6h21.6M1566.8 195.3h8.1M1566.8 210.4h11.7M1566.8 212.0h8.1M1568.6 223.8h33.3M1570.4 225.4h34.2M1568.6 227.1h34.2M1566.8 228.8h16.2M1565.0 230.5h21.6M1563.2 232.1h13.5M1565.0 237.2h15.3M1566.8 247.2h19.8M1568.6 248.9h11.7M1570.4 257.2h33.3M1572.2 258.9h34.2M1570.4 260.6h34.2M1568.6 262.3h16.2M1566.8 264.0h18.0M1565.0 265.6h10.8M1565.0 270.7h15.3M1566.8 280.7h16.2M1568.6 282.4h8.1M1570.4 294.1h33.3M1572.2 295.8h34.2M1570.4 297.5h34.2M1568.6 299.1h11.7M1568.6 300.8h11.7M1570.4 312.5h33.3M1572.2 314.2h34.2M1570.4 315.9h34.2M1568.6 317.6h11.7M1568.6 319.2h11.7M1568.6 332.6h9.9M1566.8 334.3h19.8M1565.0 336.0h10.8M1565.0 341.0h8.1M1566.8 347.7h18.9M1568.6 349.4h8.1M1570.4 362.8h33.3M1572.2 364.5h34.2M1570.4 366.1h34.2M1568.6 367.8h11.7M1568.6 369.5h8.1M1568.6 382.9h17.1M1568.6 384.6h11.7M1568.6 399.6h9.9M1566.8 401.3h20.7M1565.0 403.0h16.2M1565.0 408.0h15.3M1566.8 418.1h22.5M1568.6 419.7h8.1M1568.6 428.1h14.4M1568.6 429.8h8.1M1568.6 438.2h11.7M1568.6 439.8h15.3M1568.6 449.9h12.6M1566.8 451.6h19.8M1565.0 453.2h9.9M1565.0 458.2h8.1M1566.8 468.3h21.6M1568.6 470.0h15.3M1568.6 478.4h11.7M1566.8 480.0h18.9M1565.0 481.7h16.2M1563.2 486.7h8.1M1565.0 498.5h14.4M1566.8 500.1h11.7M1568.6 515.2h33.3M1570.4 516.9h34.2M1568.6 518.5h34.2M1566.8 520.2h16.2M1565.0 521.9h21.6M1563.2 523.6h10.8M1565.0 528.6h8.1M1566.8 537.0h15.3M1568.6 538.6h11.7M1570.4 548.7h33.3M1572.2 550.4h34.2M1570.4 552.0h34.2M1568.6 553.7h14.4M1568.6 555.4h8.1M1570.4 568.8h33.3M1572.2 570.5h34.2M1570.4 572.1h34.2M1568.6 573.8h11.7M1566.8 575.5h20.7M1565.0 577.2h11.7M1565.0 582.2h8.1M1566.8 593.9h18.0M1568.6 595.6h15.3M1568.6 604.0h9.9M1566.8 605.6h24.3M1565.0 607.3h12.6M1563.2 612.4h8.1M1565.0 622.4h18.9M1566.8 624.1h11.7M1568.6 639.1h33.3M1570.4 640.8h34.2M1568.6 642.5h34.2M1566.8 644.2h12.6M1565.0 645.9h21.6M1563.2 647.5h12.6M1565.0 652.5h8.1M1566.8 659.2h15.3M1568.6 660.9h11.7M1570.4 676.0h33.3M1572.2 677.7h34.2M1570.4 679.4h34.2M1568.6 681.0h9.9M1568.6 682.7h11.7M1568.6 691.1h12.6M1568.6 692.8h15.3M1570.4 701.1h33.3M1572.2 702.8h34.2M1570.4 704.5h34.2M1568.6 706.1h12.6M1566.8 707.8h18.0M1565.0 709.5h17.1M1565.0 714.5h8.1M1566.8 724.6h21.6M1568.6 726.2h15.3M1570.4 736.3h33.3M1572.2 738.0h34.2M1570.4 739.6h34.2M1568.6 741.3h9.9M1568.6 743.0h15.3M1568.6 756.4h13.5M1568.6 758.1h8.1M1570.4 771.5h33.3M1572.2 773.1h34.2M1570.4 774.8h34.2M1568.6 776.5h13.5M1566.8 778.2h18.9M1565.0 779.9h9.9M1565.0 784.9h8.1"/><path stroke="#557e97" d="M1567.7 -0.7h7.2M1567.7 1.0h9.0M1567.7 2.7h6.3M1567.7 4.3h8.1M1567.7 6.0h7.2M1567.7 7.7h10.8M1565.0 9.4h9.0M1565.0 11.0h10.8M1565.0 14.4h16.2M1565.0 16.1h21.6M1565.0 17.7h9.0M1565.0 19.4h7.2M1565.0 21.1h5.4M1570.4 22.8h5.4M1566.8 24.4h9.0M1566.8 26.1h10.8M1565.0 34.5h16.2M1565.0 36.1h21.6M1565.0 37.8h9.0M1565.0 39.5h10.8M1565.0 41.2h16.2M1571.3 44.5h23.4M1570.4 46.2h23.4M1570.4 47.9h10.8M1579.4 57.9h5.4M1579.4 59.6h30.6M1579.4 61.3h6.3M1579.4 62.9h10.8M1579.4 64.6h16.2M1579.4 66.3h13.5M1579.4 68.0h15.3M1579.4 69.7h16.2M1575.8 73.0h5.4M1575.8 74.7h30.6M1575.8 76.3h5.4M1575.8 78.0h16.2M1575.8 79.7h9.0M1575.8 81.4h10.8M1575.8 83.0h12.6M1575.8 84.7h16.2M1581.2 99.8h5.4M1581.2 101.5h30.6M1581.2 103.2h6.3M1581.2 104.8h10.8M1581.2 106.5h16.2M1581.2 108.2h13.5M1581.2 109.8h15.3M1581.2 111.5h16.2M1581.2 113.2h9.9M1577.6 116.5h5.4M1577.6 118.2h30.6M1577.6 119.9h5.4M1577.6 121.6h16.2M1577.6 123.2h9.0M1577.6 124.9h10.8M1577.6 126.6h12.6M1577.6 128.3h16.2M1581.2 143.4h5.4M1581.2 145.0h30.6M1581.2 146.7h6.3M1581.2 148.4h10.8M1581.2 150.1h16.2M1581.2 151.7h13.5M1581.2 153.4h15.3M1581.2 155.1h16.2M1581.2 156.8h9.9M1577.6 160.1h5.4M1577.6 161.8h30.6M1577.6 163.5h5.4M1577.6 165.1h16.2M1577.6 166.8h9.0M1577.6 168.5h10.8M1577.6 170.2h12.6M1577.6 171.8h16.2M1579.4 186.9h5.4M1572.2 188.6h7.2M1572.2 190.3h17.1M1572.2 191.9h11.7M1575.8 195.3h5.4M1575.8 197.0h30.6M1575.8 198.6h5.4M1575.8 200.3h15.3M1575.8 202.0h10.8M1575.8 203.7h8.1M1575.8 205.3h16.2M1575.8 207.0h7.2M1575.8 208.7h12.6M1575.8 212.0h5.4M1583.0 213.7h30.6M1583.0 215.4h7.2M1583.0 217.1h6.3M1583.0 218.7h5.4M1583.0 220.4h9.9M1583.0 222.1h16.2M1581.2 237.2h5.4M1581.2 238.8h19.8M1581.2 240.5h14.4M1581.2 242.2h18.0M1581.2 243.9h22.5M1581.2 245.5h8.1M1581.2 248.9h5.4M1581.2 250.6h30.6M1581.2 252.2h6.3M1581.2 253.9h13.5M1581.2 255.6h14.4M1581.2 270.7h5.4M1581.2 272.3h23.4M1581.2 274.0h18.0M1581.2 275.7h16.2M1581.2 277.4h15.3M1581.2 279.0h18.0M1577.6 282.4h5.4M1577.6 284.1h30.6M1577.6 285.7h8.1M1577.6 287.4h10.8M1577.6 289.1h15.3M1577.6 290.8h6.3M1577.6 292.4h17.1M1581.2 300.8h5.4M1581.2 302.5h30.6M1581.2 304.2h15.3M1581.2 305.8h8.1M1581.2 307.5h9.0M1581.2 309.2h10.8M1581.2 310.9h10.8M1581.2 319.2h5.4M1577.6 320.9h30.6M1577.6 322.6h14.4M1577.6 324.2h13.5M1577.6 325.9h5.4M1577.6 327.6h15.3M1577.6 329.3h15.3M1577.6 331.0h7.2M1574.0 341.0h5.4M1581.2 342.7h8.1M1581.2 344.4h21.6M1581.2 346.0h20.7M1577.6 349.4h5.4M1577.6 351.1h30.6M1577.6 352.7h8.1M1577.6 354.4h11.7M1577.6 356.1h14.4M1577.6 357.8h7.2M1577.6 359.4h18.0M1577.6 361.1h18.0M1577.6 369.5h5.4M1584.8 371.2h30.6M1584.8 372.8h9.0M1584.8 374.5h4.5M1584.8 376.2h14.4M1584.8 377.9h4.5M1584.8 379.5h12.6M1584.8 381.2h6.3M1581.2 384.6h5.4M1581.2 386.2h30.6M1581.2 387.9h13.5M1581.2 389.6h10.8M1581.2 391.2h9.9M1581.2 392.9h10.8M1581.2 394.6h15.3M1581.2 396.3h10.8M1581.2 398.0h18.0M1581.2 408.0h30.6M1581.2 409.7h15.3M1581.2 411.4h11.7M1581.2 413.0h11.7M1581.2 414.7h10.8M1581.2 416.4h10.8M1577.6 419.7h5.4M1584.8 421.4h30.6M1584.8 423.1h7.2M1584.8 424.8h9.9M1584.8 426.4h9.0M1577.6 429.8h5.4M1581.2 431.5h30.6M1581.2 433.1h9.0M1581.2 434.8h8.1M1581.2 436.5h8.1M1584.8 439.8h5.4M1584.8 441.5h30.6M1584.8 443.2h8.1M1584.8 444.9h4.5M1584.8 446.5h7.2M1584.8 448.2h8.1M1574.0 458.2h5.4M1574.0 459.9h20.7M1574.0 461.6h9.0M1574.0 463.3h15.3M1574.0 465.0h21.6M1574.0 466.6h19.8M1584.8 470.0h5.4M1584.8 471.7h30.6M1584.8 473.3h17.1M1584.8 475.0h9.0M1584.8 476.7h4.5M1572.2 486.7h30.6M1579.4 488.4h8.1M1579.4 490.1h6.3M1579.4 491.8h10.8M1579.4 493.4h6.3M1579.4 495.1h8.1M1579.4 496.8h18.0M1579.4 500.1h5.4M1583.0 501.8h30.6M1583.0 503.5h9.9M1583.0 505.2h11.7M1583.0 506.8h18.0M1583.0 508.5h10.8M1583.0 510.2h11.7M1583.0 511.9h9.9M1583.0 513.5h8.1M1574.0 528.6h5.4M1574.0 530.3h23.4M1574.0 531.9h15.3M1574.0 533.6h12.6M1574.0 535.3h18.0M1581.2 538.6h5.4M1584.8 540.3h30.6M1584.8 542.0h16.2M1584.8 543.7h15.3M1584.8 545.4h16.2M1584.8 547.0h14.4M1577.6 555.4h5.4M1584.8 557.1h30.6M1584.8 558.8h4.5M1584.8 560.4h13.5M1584.8 562.1h12.6M1584.8 563.8h6.3M1584.8 565.4h10.8M1584.8 567.1h6.3M1574.0 582.2h5.4M1581.2 583.9h14.4M1581.2 585.5h12.6M1581.2 587.2h9.9M1581.2 588.9h7.2M1581.2 590.6h5.4M1581.2 592.2h7.2M1584.8 595.6h5.4M1577.6 597.3h30.6M1577.6 598.9h17.1M1577.6 600.6h13.5M1577.6 602.3h16.2M1572.2 612.4h5.4M1572.2 614.0h23.4M1572.2 615.7h19.8M1572.2 617.4h10.8M1572.2 619.0h18.0M1572.2 620.7h9.9M1579.4 624.1h5.4M1575.8 625.8h30.6M1575.8 627.4h9.9M1575.8 629.1h18.0M1575.8 630.8h17.1M1575.8 632.4h16.2M1575.8 634.1h18.0M1575.8 635.8h15.3M1575.8 637.5h12.6M1574.0 652.5h5.4M1574.0 654.2h23.4M1574.0 655.9h12.6M1574.0 657.6h9.9M1581.2 660.9h5.4M1584.8 662.6h30.6M1584.8 664.3h10.8M1584.8 665.9h12.6M1584.8 667.6h17.1M1584.8 669.3h9.0M1584.8 671.0h17.1M1584.8 672.6h11.7M1584.8 674.3h13.5M1581.2 682.7h5.4M1581.2 684.4h30.6M1581.2 686.0h13.5M1581.2 687.7h6.3M1581.2 689.4h11.7M1584.8 692.8h5.4M1577.6 694.4h30.6M1577.6 696.1h8.1M1577.6 697.8h5.4M1577.6 699.4h4.5M1574.0 714.5h30.6M1574.0 716.2h22.5M1574.0 717.9h9.0M1574.0 719.5h19.8M1574.0 721.2h17.1M1574.0 722.9h19.8M1584.8 726.2h5.4M1584.8 727.9h30.6M1584.8 729.6h6.3M1584.8 731.3h5.4M1584.8 732.9h14.4M1584.8 734.6h15.3M1584.8 743.0h5.4M1584.8 744.7h30.6M1584.8 746.4h11.7M1584.8 748.0h17.1M1584.8 749.7h6.3M1584.8 751.4h6.3M1584.8 753.0h6.3M1584.8 754.7h18.0M1577.6 758.1h5.4M1577.6 759.8h30.6M1577.6 761.4h18.0M1577.6 763.1h6.3M1577.6 764.8h12.6M1577.6 766.4h5.4M1577.6 768.1h9.9M1577.6 769.8h8.1M1574.0 784.9h30.6M1581.2 786.5h18.9M1581.2 788.2h19.8M1581.2 789.9h18.0"/><path stroke="#7c5447" d="M1574.9 -0.7h5.4M1576.7 1.0h10.8M1574.0 2.7h4.5M1575.8 4.3h2.7M1574.9 6.0h32.4M1578.5 7.7h7.2M1574.0 9.4h7.2M1575.8 11.0h75.7M1581.2 14.4h54.0M1586.6 16.1h21.6M1574.0 17.7h23.4M1572.2 19.4h19.8M1570.4 21.1h9.0M1575.8 22.8h63.0M1575.8 24.4h28.8M1577.6 26.1h25.2M1581.2 34.5h37.8M1586.6 36.1h19.8M1574.0 37.8h25.2M1575.8 39.5h27.0M1581.2 41.2h67.5M1594.7 44.5h56.8M1593.8 46.2h57.7M1581.2 47.9h27.0M1584.8 57.9h66.7M1610.0 59.6h41.5M1585.7 61.3h9.0M1590.2 62.9h29.7M1595.6 64.6h14.4M1592.9 66.3h42.3M1594.7 68.0h56.8M1595.6 69.7h8.1M1581.2 73.0h70.3M1606.4 74.7h39.6M1581.2 76.3h32.4M1592.0 78.0h5.4M1584.8 79.7h45.0M1586.6 81.4h27.0M1588.4 83.0h32.4M1592.0 84.7h7.2M1586.6 99.8h64.9M1611.8 101.5h39.7M1587.5 103.2h9.0M1592.0 104.8h29.7M1597.4 106.5h14.4M1594.7 108.2h42.3M1596.5 109.8h55.0M1597.4 111.5h8.1M1591.1 113.2h60.4M1583.0 116.5h68.5M1608.2 118.2h43.3M1583.0 119.9h32.4M1593.8 121.6h5.4M1586.6 123.2h45.0M1588.4 124.9h27.0M1590.2 126.6h32.4M1593.8 128.3h7.2M1586.6 143.4h64.9M1611.8 145.0h39.7M1587.5 146.7h9.0M1592.0 148.4h29.7M1597.4 150.1h14.4M1594.7 151.7h42.3M1596.5 153.4h55.0M1597.4 155.1h8.1M1591.1 156.8h60.4M1583.0 160.1h68.5M1608.2 161.8h37.8M1583.0 163.5h32.4M1593.8 165.1h5.4M1586.6 166.8h45.0M1588.4 168.5h27.0M1590.2 170.2h32.4M1593.8 171.8h7.2M1584.8 186.9h55.8M1579.4 188.6h31.5M1589.3 190.3h10.8M1583.9 191.9h11.7M1581.2 195.3h70.3M1606.4 197.0h38.7M1581.2 198.6h37.8M1591.1 200.3h8.1M1586.6 202.0h7.2M1583.9 203.7h21.6M1592.0 205.3h13.5M1583.0 207.0h37.8M1588.4 208.7h36.9M1581.2 212.0h70.3M1613.6 213.7h37.8M1590.2 215.4h36.9M1589.3 217.1h37.8M1588.4 218.7h40.5M1592.9 220.4h33.3M1599.2 222.1h49.5M1586.6 237.2h31.5M1601.0 238.8h35.1M1595.6 240.5h48.6M1599.2 242.2h23.4M1603.7 243.9h10.8M1589.3 245.5h36.0M1586.6 248.9h53.1M1611.8 250.6h39.7M1587.5 252.2h48.6M1594.7 253.9h24.3M1595.6 255.6h39.6M1586.6 270.7h29.7M1604.6 272.3h39.6M1599.2 274.0h23.4M1597.4 275.7h45.0M1596.5 277.4h8.1M1599.2 279.0h27.0M1583.0 282.4h68.5M1608.2 284.1h37.8M1585.7 285.7h47.7M1588.4 287.4h27.9M1592.9 289.1h33.3M1583.9 290.8h14.4M1594.7 292.4h27.9M1586.6 300.8h64.9M1611.8 302.5h39.7M1596.5 304.2h18.0M1589.3 305.8h9.9M1590.2 307.5h13.5M1592.0 309.2h43.2M1592.0 310.9h5.4M1586.6 319.2h61.2M1608.2 320.9h36.0M1592.0 322.6h40.5M1591.1 324.2h12.6M1583.0 325.9h31.5M1592.9 327.6h27.9M1592.9 329.3h27.9M1584.8 331.0h32.4M1579.4 341.0h45.9M1589.3 342.7h7.2M1602.8 344.4h15.3M1601.9 346.0h12.6M1583.0 349.4h48.6M1608.2 351.1h43.3M1585.7 352.7h41.4M1589.3 354.4h25.2M1592.0 356.1h32.4M1584.8 357.8h11.7M1595.6 359.4h31.5M1595.6 361.1h32.4M1583.0 369.5h63.9M1615.4 371.2h36.1M1593.8 372.8h35.1M1589.3 374.5h17.1M1599.2 376.2h13.5M1589.3 377.9h48.6M1597.4 379.5h42.3M1591.1 381.2h45.0M1586.6 384.6h54.0M1611.8 386.2h38.7M1594.7 387.9h41.4M1592.0 389.6h40.5M1591.1 391.2h51.3M1592.0 392.9h52.2M1596.5 394.6h47.7M1592.0 396.3h16.2M1599.2 398.0h25.2M1611.8 408.0h39.7M1596.5 409.7h11.7M1592.9 411.4h12.6M1592.9 413.0h34.2M1592.0 414.7h26.1M1592.0 416.4h34.2M1583.0 419.7h68.5M1615.4 421.4h36.1M1592.0 423.1h27.0M1594.7 424.8h32.4M1593.8 426.4h29.7M1583.0 429.8h67.5M1611.8 431.5h39.7M1590.2 433.1h14.4M1589.3 434.8h6.3M1589.3 436.5h38.7M1590.2 439.8h61.3M1615.4 441.5h36.1M1592.9 443.2h6.3M1589.3 444.9h51.3M1592.0 446.5h35.1M1592.9 448.2h29.7M1579.4 458.2h60.3M1594.7 459.9h30.6M1583.0 461.6h9.9M1589.3 463.3h33.3M1595.6 465.0h54.0M1593.8 466.6h30.6M1590.2 470.0h53.1M1615.4 471.7h36.1M1601.9 473.3h49.5M1593.8 475.0h39.6M1589.3 476.7h49.5M1602.8 486.7h48.7M1587.5 488.4h38.7M1585.7 490.1h20.7M1590.2 491.8h22.5M1585.7 493.4h51.3M1587.5 495.1h36.0M1597.4 496.8h38.7M1584.8 500.1h63.0M1613.6 501.8h37.9M1592.9 503.5h45.0M1594.7 505.2h30.6M1601.0 506.8h34.2M1593.8 508.5h45.0M1594.7 510.2h36.9M1592.9 511.9h30.6M1591.1 513.5h28.8M1579.4 528.6h44.1M1597.4 530.3h45.0M1589.3 531.9h15.3M1586.6 533.6h14.4M1592.0 535.3h19.8M1586.6 538.6h54.0M1615.4 540.3h36.1M1601.0 542.0h34.2M1600.1 543.7h24.3M1601.0 545.4h16.2M1599.2 547.0h23.4M1583.0 555.4h63.9M1615.4 557.1h36.1M1589.3 558.8h27.0M1598.3 560.4h35.1M1597.4 562.1h34.2M1591.1 563.8h11.7M1595.6 565.4h10.8M1591.1 567.1h19.8M1579.4 582.2h57.6M1595.6 583.9h11.7M1593.8 585.5h9.9M1591.1 587.2h31.5M1588.4 588.9h22.5M1586.6 590.6h43.2M1588.4 592.2h53.1M1590.2 595.6h57.6M1608.2 597.3h39.6M1594.7 598.9h5.4M1591.1 600.6h36.9M1593.8 602.3h20.7M1577.6 612.4h36.9M1595.6 614.0h24.3M1592.0 615.7h50.4M1583.0 617.4h23.4M1590.2 619.0h36.0M1582.1 620.7h22.5M1584.8 624.1h46.8M1606.4 625.8h32.4M1585.7 627.4h34.2M1593.8 629.1h18.9M1592.9 630.8h10.8M1592.0 632.4h43.2M1593.8 634.1h36.0M1591.1 635.8h34.2M1588.4 637.5h45.0M1579.4 652.5h34.2M1597.4 654.2h49.5M1586.6 655.9h31.5M1583.9 657.6h9.9M1586.6 660.9h64.9M1615.4 662.6h36.1M1595.6 664.3h45.0M1597.4 665.9h7.2M1601.9 667.6h15.3M1593.8 669.3h20.7M1601.9 671.0h5.4M1596.5 672.6h26.1M1598.3 674.3h36.9M1586.6 682.7h56.7M1611.8 684.4h36.9M1594.7 686.0h27.0M1587.5 687.7h32.4M1592.9 689.4h34.2M1590.2 692.8h45.0M1608.2 694.4h39.6M1585.7 696.1h27.9M1583.0 697.8h27.9M1582.1 699.4h22.5M1604.6 714.5h46.9M1596.5 716.2h44.1M1583.0 717.9h9.0M1593.8 719.5h43.2M1591.1 721.2h48.6M1593.8 722.9h14.4M1590.2 726.2h45.9M1615.4 727.9h36.1M1591.1 729.6h6.3M1590.2 731.3h12.6M1599.2 732.9h10.8M1600.1 734.6h30.6M1590.2 743.0h61.3M1615.4 744.7h36.1M1596.5 746.4h5.4M1601.9 748.0h49.6M1591.1 749.7h47.7M1591.1 751.4h43.2M1591.1 753.0h47.7M1602.8 754.7h19.8M1583.0 758.1h56.7M1608.2 759.8h43.3M1595.6 761.4h27.0M1583.9 763.1h32.4M1590.2 764.8h49.5M1583.0 766.4h40.5M1587.5 768.1h9.0M1585.7 769.8h24.3M1604.6 784.9h32.4M1600.1 786.5h23.4M1601.0 788.2h23.4M1599.2 789.9h33.3"/><path stroke="#406336" d="M1557.8 12.7h19.8M1557.8 32.8h10.8M1563.2 56.2h18.0M1565.0 98.1h28.8M1565.0 141.7h34.2M1563.2 185.2h22.5M1565.0 235.5h17.1M1565.0 269.0h26.1M1565.0 339.3h25.2M1565.0 406.3h18.0M1565.0 456.6h18.0M1563.2 485.1h27.9M1565.0 526.9h24.3M1565.0 580.5h19.8M1563.2 610.7h17.1M1565.0 650.9h23.4M1565.0 712.9h29.7M1565.0 783.2h13.5"/></svg>
<span class="tx" style="left:1325.6px;top:728.3px;font-size:18px;line-height:22px;color:#808080;letter-spacing:-0.155px;">Windows'u Etkinleştir</span>
<span class="tx" style="left:1325.6px;top:750.8px;font-size:13px;line-height:16px;color:#747474;letter-spacing:0.176px;">Windows'u etkinleştirmek için Ayarlar'a gidin.</span>
<div class="abs" style="left:1651.5px;top:-.5px;width:13px;height:793px;background:#212121;border-left:1px solid #2c2c2c;border-top:1px solid #2c2c2c"></div>
<div class="abs" style="left:1652.5px;top:123.6px;width:12px;height:55px;background:#4a494b"></div>
<div class="abs" style="left:1652.5px;top:144px;width:12px;height:1.4px;background:#a6a6a6"></div>
</div>

<div id="status" class="abs">
<div class="abs" style="left:0;top:-1px;width:30px;height:20px;background:#0078d4"></div>
<svg style="left:10.50px;top:5.00px" width="10.00" height="10.00" viewBox="0 0 10 10" ><path d="M.7 3 4.200 6.200 .7 9.400M9.300 .6 5.800 3.800 9.300 7" fill="none" stroke="#fff" stroke-width="1.200"/></svg>
<div class="abs" style="left:30px;top:-1px;width:110.500px;height:20px;background:#3a3d41"></div>
<svg style="left:40.20px;top:5.30px" width="10.50" height="11.50" viewBox="0 0 11 13" ><path d="M5.500.700 10.300 2.300V6.300C10.300 9.300 8.300 11.300 5.500 12.300 2.700 11.300.700 9.300.700 6.300V2.300Z" fill="none" stroke="#ccc" stroke-width="1.300"/><circle cx="5.500" cy="5.300" r="1.500" fill="#ccc"/><path d="M5.500 6V9" stroke="#ccc" stroke-width="1.300"/></svg>
<span class="tx" style="left:54.1px;top:2.8px;font-size:11px;line-height:13px;color:#ccc;letter-spacing:-0.146px;">Restricted Mode</span>
<svg style="left:147.50px;top:4.40px" width="11.20" height="11.20" viewBox="0 0 11.200 11.200" ><circle cx="5.600" cy="5.600" r="5" fill="none" stroke="#ccc" stroke-width="1.100"/><path d="M3.500 3.500 7.700 7.700M7.700 3.500 3.500 7.700" stroke="#ccc" stroke-width="1.100"/></svg>
<span class="tx" style="left:162.1px;top:2.8px;font-size:11px;line-height:13px;color:#ccc;letter-spacing:0.000px;">0</span>
<svg style="left:172.30px;top:4.40px" width="11.00" height="9.80" viewBox="0 0 11 10.500" ><path d="M5.500.800 10.400 9.800H.6Z" fill="none" stroke="#ccc" stroke-width="1.100" stroke-linejoin="round"/><path d="M5.500 4V6.800M5.500 7.700V8.700" stroke="#ccc" stroke-width="1.100"/></svg>
<span class="tx" style="left:186.6px;top:2.8px;font-size:11px;line-height:13px;color:#ccc;letter-spacing:0.000px;">0</span>
<span class="tx" style="left:1333.6px;top:2.7px;font-size:11px;line-height:13px;color:#ccc;letter-spacing:-0.320px;">Ln 125, Col 10</span>
<span class="tx" style="left:1414.0px;top:2.7px;font-size:11px;line-height:13px;color:#ccc;letter-spacing:-0.590px;">Spaces: 2</span>
<span class="tx" style="left:1471.6px;top:2.7px;font-size:11px;line-height:13px;color:#ccc;letter-spacing:-0.239px;">UTF-8 with BOM</span>
<span class="tx" style="left:1563.6px;top:2.7px;font-size:11px;line-height:13px;color:#ccc;letter-spacing:-1.545px;">CRLF</span>
<span class="tx" style="left:1602.4px;top:2.7px;font-size:11px;line-height:13px;color:#ccc;letter-spacing:3.441px;">{}</span>
<span class="tx" style="left:1619.1px;top:2.7px;font-size:11px;line-height:13px;color:#ccc;letter-spacing:-0.763px;">XML</span>
<svg style="left:1654.00px;top:4.50px" width="13.00" height="11.00" viewBox="0 0 15.400 13" ><circle cx="5.700" cy="3.400" r="3.400" fill="#d0d0d0"/><circle cx="10.500" cy="3.400" r="3.400" fill="#d0d0d0"/><rect x="0" y="4.800" width="15.400" height="8.200" rx="4" fill="#d0d0d0"/><circle cx="5.600" cy="3.200" r="1.650" fill="#181818"/><circle cx="10.600" cy="3.200" r="1.650" fill="#181818"/><rect x="3.700" y="6.600" width="8.300" height="3.800" rx="1.300" fill="#181818"/><path d="M6.500 7V10M9.300 7V10" stroke="#d0d0d0" stroke-width=".8"/></svg>
<svg style="left:1682.00px;top:4.00px" width="11.00" height="12.00" viewBox="0 0 11 12" ><path d="M1 9.500H10L9 8V5A3.500 3.500 0 0 0 2 5V8Z" fill="none" stroke="#ccc" stroke-width="1.100" stroke-linejoin="round"/><path d="M4.300 10.200A1.300 1.300 0 0 0 6.700 10.200" fill="none" stroke="#ccc" stroke-width="1"/></svg>
</div>

<div id="task" class="abs">
<div class="abs" style="left:0;top:-.6px;width:1707px;height:1px;background:#39383d"></div>
<svg style="left:16.00px;top:8.00px" width="24.00" height="24.00" viewBox="0 0 24 24" ><circle cx="8.500" cy="8" r="5.500" fill="#f5a623"/><path d="M8.500 0 10 3 7 3ZM0 8 3 6.500 3 9.500ZM2.500 2 5.500 3.500 4 5Z" fill="#f5a623"/><path d="M5 22.500A4.200 4.200 0 0 1 4.500 14.200 6 6 0 0 1 15.500 12.500 5 5 0 0 1 18.500 22.500Z" fill="#c9d9f2"/><path d="M5 22.500A4.200 4.200 0 0 1 1 17.500C6 20.500 16 20.500 23 17 23 20 21 22.500 18.500 22.500Z" fill="#9fb8e6"/></svg>
<div class="abs" style="left:27px;top:5.0px;width:13.500px;height:13.500px;border-radius:50%;background:#c42b2b"></div>
<span class="tx" style="left:30.4px;top:4.7px;font-size:10.5px;line-height:13px;color:#fff;letter-spacing:0.000px;font-weight:bold">4</span>
<span class="tx" style="left:44.6px;top:6.7px;font-size:11px;line-height:13px;color:#fff;letter-spacing:-0.526px;">26°C</span>
<span class="tx" style="left:44.6px;top:20.7px;font-size:11px;line-height:13px;color:#d6d6d6;letter-spacing:0.085px;">Çok bulutlu</span>
<svg style="left:430.50px;top:10.50px" width="21.30" height="21.30" viewBox="0 0 21.300 21.300" ><defs><linearGradient id="wg" x1="0" y1="0" x2="1" y2="1"><stop offset="0" stop-color="#6fd6fb"/><stop offset="1" stop-color="#1e9ae6"/></linearGradient></defs><rect x="0" y="0" width="10.100" height="10.100" rx=".8" fill="url(#wg)"/><rect x="11.200" y="0" width="10.100" height="10.100" rx=".8" fill="url(#wg)"/><rect x="0" y="11.200" width="10.100" height="10.100" rx=".8" fill="url(#wg)"/><rect x="11.200" y="11.200" width="10.100" height="10.100" rx=".8" fill="url(#wg)"/></svg>
<div class="abs" style="left:464px;top:7.0px;width:194px;height:27.500px;border-radius:14px;background:linear-gradient(180deg,#fafafa,#e9e9ea);box-shadow:0 0 0 .5px #cfcfcf"></div>
<svg style="left:473.30px;top:14.00px" width="14.00" height="14.00" viewBox="0 0 14 14" ><circle cx="5.800" cy="5.800" r="4.600" fill="none" stroke="#222" stroke-width="1.400"/><path d="M9.200 9.200 13 13" stroke="#222" stroke-width="1.700" stroke-linecap="round"/></svg>
<span class="tx" style="left:495.8px;top:14.5px;font-size:12px;line-height:14px;color:#5a5a5a;letter-spacing:0.206px;">Ara</span>
<svg style="left:669.50px;top:10.50px" width="22.00" height="20.00" viewBox="0 0 22 20" ><rect x="0" y="6" width="15" height="13.500" rx="1" fill="#5c5c5c"/><rect x="6" y="0" width="15.500" height="14" rx="1" fill="#dcdcdc"/><rect x="6" y="6" width="9" height="8" fill="#a5a5a5"/></svg>
<svg style="left:708.00px;top:11.00px" width="22.00" height="19.50" viewBox="0 0 22 19.500" ><path d="M0 2A1.500 1.500 0 0 1 1.500.500H7L9 2.500H20.500A1.500 1.500 0 0 1 22 4V18A1.500 1.500 0 0 1 20.500 19.500H1.500A1.500 1.500 0 0 1 0 18Z" fill="#e8a520"/><path d="M0 4.500H22V18A1.500 1.500 0 0 1 20.500 19.500H1.500A1.500 1.500 0 0 1 0 18Z" fill="#f7c948"/><path d="M4.500 19.500V14.500A1.500 1.500 0 0 1 6 13H16A1.500 1.500 0 0 1 17.500 14.500V19.500Z" fill="#1273c4"/></svg>
<div class="abs" style="left:716.500px;top:35.0px;width:5.500px;height:2.500px;border-radius:1.500px;background:#9a9a9a"></div>
<svg style="left:747.50px;top:10.30px" width="21.00" height="21.00" viewBox="0 0 21 21" ><circle cx="10.500" cy="10.500" r="10.500" fill="#5865f2"/><path d="M5 14.500C4.500 11 5.500 8 7 6.500 8 6 9 5.800 9.500 5.800L10 6.500H11L11.500 5.800C12 5.800 13 6 14 6.500 15.500 8 16.500 11 16 14.500 15 15.300 14 15.700 13 15.800L12.500 14.800C11.500 15.100 9.500 15.100 8.500 14.800L8 15.800C7 15.700 6 15.300 5 14.500Z" fill="#fff"/><ellipse cx="8.500" cy="11.200" rx="1.200" ry="1.400" fill="#5865f2"/><ellipse cx="12.500" cy="11.200" rx="1.200" ry="1.400" fill="#5865f2"/></svg>
<svg style="left:786.00px;top:10.00px" width="21.50" height="21.50" viewBox="0 0 21.500 21.500" ><circle cx="10.750" cy="10.750" r="10" fill="none" stroke="#e0203f" stroke-width="1.400"/><ellipse cx="10.750" cy="10.750" rx="5.800" ry="9" fill="none" stroke="#e0203f" stroke-width="1.400"/></svg>
<svg style="left:826.00px;top:13.50px" width="21.50" height="15.50" viewBox="0 0 21.500 15.500" ><rect x="0" y="0" width="21.500" height="15.500" rx="3.500" fill="#e5092c"/><path d="M8.500 4.300 14 7.750 8.500 11.200Z" fill="#fff"/></svg>
<div class="abs" style="left:838px;top:6.3px;width:13.500px;height:13.500px;border-radius:50%;background:#0e8a78"></div>
<span class="tx" style="left:841.3px;top:7.5px;font-size:8.5px;line-height:10px;color:#e8f5f2;letter-spacing:0.000px;font-weight:bold">C</span>
<div class="abs" style="left:834px;top:35.0px;width:5.500px;height:2.500px;border-radius:1.500px;background:#9a9a9a"></div>
<svg style="left:868.00px;top:10.50px" width="15.00" height="20.00" viewBox="0 0 15 20" ><rect x="4.300" y="0" width="6.400" height="12" rx="3.200" fill="#e8650e"/><path d="M1 8.500A6.500 6.500 0 0 0 14 8.500M7.500 15V19M4 19.200H11" fill="none" stroke="#e8650e" stroke-width="1.500"/></svg>
<svg style="left:903.70px;top:10.00px" width="22.00" height="21.50" viewBox="0 0 22 21.500" ><rect x="0" y="0" width="22" height="21.500" rx="3.500" fill="#e6e4e4"/><path d="M12 3.500C15 6 17 9.500 17 12.500A5.500 5.500 0 0 1 6 12.500C6 10 7.500 8 9 7 10 8 10.500 8.500 11 8.500 11.500 7 12 5 12 3.500Z" fill="#22b8c9"/><path d="M12 3.500C15 6 17 9.500 17 12.500 15 10 13 9 11 8.500 11.500 7 12 5 12 3.500Z" fill="#f59a23"/><path d="M6 12.500C6 10 7.500 8 9 7 10 8 10.500 8.500 11 8.500 9 10 7.500 11 6 12.500Z" fill="#e63946"/><path d="M6.200 14A5.500 5.500 0 0 0 15 16.500C12 17 8.500 16 6.200 14Z" fill="#3aa84a"/></svg>
<svg style="left:943.50px;top:10.50px" width="20.50" height="20.50" viewBox="0 0 20.500 20.500" ><circle cx="10.250" cy="10.250" r="9.600" fill="#26252b" stroke="#bdbdbd" stroke-width="1.200"/><path d="M10.250 10.250C8 8 8 5 10 2.500M10.250 10.250C13.500 9.500 16 11 17 14M10.250 10.250C9.500 13.500 7 15.500 3.500 15" fill="none" stroke="#c8c8c8" stroke-width="1.600"/></svg>
<svg style="left:982.00px;top:10.00px" width="22.00" height="21.50" viewBox="0 0 22 21.500" ><rect x=".6" y=".6" width="20.800" height="20.300" fill="#07080c" stroke="#1ba1e6" stroke-width="1.200"/></svg>
<span class="tx" style="left:987.9px;top:11.8px;font-size:14px;line-height:17px;color:#2aa7ea;letter-spacing:0.000px;font-weight:bold">V</span>
<span class="tx" style="left:995.9px;top:24.2px;font-size:4.5px;line-height:5px;color:#2aa7ea;letter-spacing:0.484px;font-weight:bold">18</span>
<svg style="left:1021.00px;top:10.00px" width="22.00" height="21.50" viewBox="0 0 22 21.500" ><defs><linearGradient id="bg1" x1="0" y1="1" x2="1" y2="0"><stop offset="0" stop-color="#1d4fd8"/><stop offset="1" stop-color="#5a2fd0"/></linearGradient></defs><rect x="0" y="0" width="22" height="21.500" fill="#06105a"/><rect x="4" y="4" width="13.500" height="13" fill="url(#bg1)"/><rect x="17" y="17" width="5" height="4.500" fill="#c92fe0"/></svg>
<svg style="left:1060.80px;top:10.50px" width="20.70" height="20.70" viewBox="0 0 20.700 20.700" ><defs><linearGradient id="sg" x1="0" y1="0" x2="0" y2="1"><stop offset="0" stop-color="#12285a"/><stop offset="1" stop-color="#1f7fc0"/></linearGradient></defs><circle cx="10.350" cy="10.350" r="10.350" fill="url(#sg)"/><circle cx="13.700" cy="7.300" r="3.300" fill="none" stroke="#fff" stroke-width="1.500"/><path d="M0 9.500 6.500 12.300A3 3 0 0 1 8 12L11 8 14.500 10.500 10.500 13.500A3 3 0 0 1 5 15L.3 13Z" fill="#fff"/></svg>
<svg style="left:1099.80px;top:10.00px" width="21.60" height="21.60" viewBox="0 0 21.600 21.600" ><path d="M10.800 0 21.600 10.800 10.800 21.600 0 10.800Z" fill="#4a4c86"/><path d="M10.800 0 21.600 10.800H0Z" fill="#8a5cb5"/><path d="M8.500 6.800 14.500 10.800 8.500 14.800Z" fill="#fff"/></svg>
<svg style="left:1140.00px;top:10.00px" width="18.60" height="21.50" viewBox="0 0 18.600 21.500" ><path d="M0 1.500Q0 0 1.500 0H17.100Q18.600 0 18.600 1.500V16Q18.600 17 17.600 17.500L9.300 21.500 1 17.500Q0 17 0 16Z" fill="#08080a"/></svg>
<span class="tx" style="left:1142.6px;top:11.8px;font-size:7.5px;line-height:9px;color:#f2f2f2;letter-spacing:-1.339px;font-weight:bold;transform:scaleY(1.45)">EPIC</span>
<span class="tx" style="left:1143.1px;top:22.1px;font-size:3.2px;line-height:4px;color:#f2f2f2;letter-spacing:0.199px;font-weight:bold">GAMES</span>
<svg style="left:1178.00px;top:10.50px" width="21.00" height="21.00" viewBox="0 0 21 21" ><circle cx="10.500" cy="10.500" r="10.500" fill="#1ed760"/><path d="M4.500 7.500C8.500 6.200 13 6.500 16.800 8.500M5 10.800C8.500 9.800 12.500 10.200 15.800 12M5.700 13.900C8.500 13.200 11.800 13.500 14.500 15" fill="none" stroke="#121212" stroke-width="1.700" stroke-linecap="round"/></svg>
<svg style="left:1216.00px;top:10.00px" width="22.60" height="21.50" viewBox="0 0 22.600 21.500" ><rect x="0" y="0" width="22.600" height="21.500" rx="4.500" fill="#7fe3c4"/><path d="M7 8.500Q7 6.500 9 6.500H15Q17 6.500 17 8.500V13Q17 15 15 15H9Q7 15 7 13Z" fill="#12151a"/><path d="M4.800 8A4.500 4.500 0 0 1 8.500 4.500" fill="none" stroke="#12151a" stroke-width="1.400"/><rect x="10.600" y="9.500" width="1.300" height="3" fill="#7fe3c4"/><rect x="13.200" y="9.500" width="1.300" height="3" fill="#7fe3c4"/></svg>
<div class="abs" style="left:1249.400px;top:3.0px;width:35px;height:35px;border-radius:4px;background:#2b2a30;box-shadow:inset 0 0 0 .5px #3a3940"></div>
<svg style="left:1255.60px;top:10.00px" width="22.00" height="22.00" viewBox="-4 0 82 87" ><path d="M74.9 9.6 56 0.5a5.7 5.7 0 0 0-6.5 1.1L13.2 34.7 4.5 28.1a3.8 3.8 0 0 0-4.9.2l-2.8 2.5a3.8 3.8 0 0 0 0 5.6L4.3 43.3l-7.5 6.9a3.8 3.8 0 0 0 0 5.6l2.8 2.5a3.8 3.8 0 0 0 4.9.2l8.7-6.6 36.3 33.1a5.7 5.7 0 0 0 6.5 1.1l18.9-9.1a5.7 5.7 0 0 0 3.2-5.2V14.8a5.7 5.7 0 0 0-3.2-5.2zM57 65.6 29.400 43.300 57 21z" fill="#1f8ad6"/></svg>
<div class="abs" style="left:1259.600px;top:35.0px;width:14px;height:2.600px;border-radius:1.300px;background:#25d0f0"></div>
<svg style="left:1408.50px;top:13.70px" width="11.50" height="13.60" viewBox="0 0 11.500 13.600" ><rect x="0" y="0" width="11.500" height="13.600" rx="5.500" fill="#1e8fe8"/><path d="M3.300 4.300 8 9 5.700 11.200V2.400L8 4.600 3.300 9.300" fill="none" stroke="#fff" stroke-width="1"/></svg>
<svg style="left:1435.40px;top:13.70px" width="14.80" height="13.60" viewBox="0 0 14.800 13.600" ><rect x="0" y="0" width="14.800" height="13.600" rx="1.500" fill="#17399a"/><path d="M7.400 3.200V4.600M7.400 5.800V10.800" stroke="#fff" stroke-width="1.800"/></svg>
<svg style="left:1464.50px;top:13.70px" width="14.00" height="14.00" viewBox="0 0 14 14" ><path d="M7 0 13 3.500V10.500L7 14 1 10.500V3.500Z" fill="#1d5fa8"/><path d="M4 10A3.500 3.500 0 0 1 8.500 4.200L6.500 7.500 10 9.500A3.500 3.500 0 0 1 4 10Z" fill="#fff"/></svg>
<svg style="left:1494.30px;top:13.00px" width="13.00" height="15.50" viewBox="0 0 13 15.500" ><rect x="2.800" y=".6" width="5" height="4" fill="none" stroke="#e6e6e6" stroke-width="1"/><rect x="1" y="4.600" width="8.600" height="10.300" rx="1.500" fill="none" stroke="#e6e6e6" stroke-width="1.100"/><path d="M8.500 12 10.500 14 13 10.500" fill="none" stroke="#e6e6e6" stroke-width="1"/></svg>
<svg style="left:1520.50px;top:15.00px" width="15.50" height="10.50" viewBox="0 0 15.500 10.500" ><rect x=".6" y=".6" width="14.300" height="9.300" rx="1.500" fill="none" stroke="#e6e6e6" stroke-width="1.100"/><path d="M3 3.500H12.500M3 5.500H12.500" stroke="#e6e6e6" stroke-width="1" stroke-dasharray="1.300 1.100"/><path d="M4.500 7.700H11" stroke="#e6e6e6" stroke-width="1"/></svg>
<span class="tx" style="left:1552.3px;top:15.4px;font-size:11px;line-height:13px;color:#fff;letter-spacing:-1.105px;">TUR</span>
<svg style="left:1588.50px;top:13.50px" width="15.00" height="15.00" viewBox="0 0 15 15" ><circle cx="7" cy="7" r="6.300" fill="none" stroke="#e6e6e6" stroke-width="1.100"/><ellipse cx="7" cy="7" rx="2.800" ry="6.300" fill="none" stroke="#e6e6e6" stroke-width="1"/><path d="M.7 7H13.300M1.500 3.800H12.500" stroke="#e6e6e6" stroke-width="1" fill="none"/><circle cx="11.300" cy="11.300" r="3.600" fill="#1c1c1d" stroke="#e6e6e6" stroke-width="1"/><path d="M8.900 13.700 13.700 8.900" stroke="#e6e6e6" stroke-width="1"/></svg>
<svg style="left:1609.50px;top:14.00px" width="15.50" height="13.00" viewBox="0 0 15.500 13" ><path d="M.6 4.500H3L6.500 1.500V11.500L3 8.500H.6Z" fill="none" stroke="#e6e6e6" stroke-width="1.100" stroke-linejoin="round"/><path d="M8.500 4.300A3 3 0 0 1 8.500 8.700M10.500 2.500A5.500 5.500 0 0 1 10.500 10.500M12.500.8A8 8 0 0 1 12.500 12.200" fill="none" stroke="#e6e6e6" stroke-width="1"/></svg>
<span class="tx" style="left:1663.6px;top:7.0px;font-size:11px;line-height:13px;color:#fff;letter-spacing:-0.233px;">22:41</span>
<span class="tx" style="left:1638.2px;top:21.1px;font-size:11px;line-height:13px;color:#fff;letter-spacing:-0.340px;">15.09.2025</span>
</div>

</div>
</body>
</html>
